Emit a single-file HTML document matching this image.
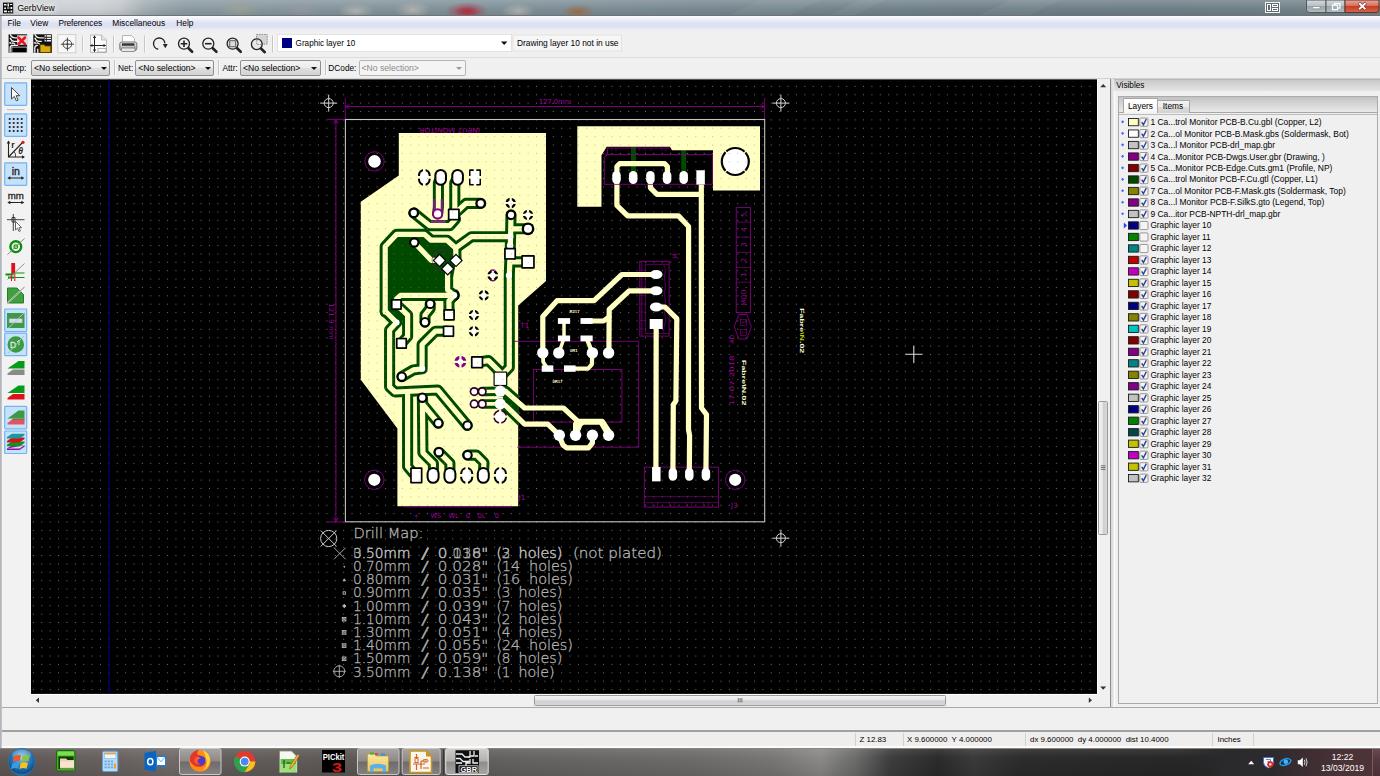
<!DOCTYPE html>
<html><head><meta charset="utf-8"><title>GerbView</title>
<style>
html,body{margin:0;padding:0;background:#f0f0f0;}
body{width:1380px;height:776px;overflow:hidden;font-family:"Liberation Sans",sans-serif;font-size:8.3px;color:#000;}
#root{position:relative;width:1380px;height:776px;overflow:hidden;background:#f0f0f0;}
.a{position:absolute;}
.t{position:absolute;white-space:pre;line-height:10px;height:10px;}
svg{position:absolute;overflow:visible;}
/* title bar */
#title{left:0;top:0;width:1380px;height:15px;background:linear-gradient(90deg,#cdd1d5 0,#cbcfd3 7%,#c2c7cb 8.7%,#a3adb3 10.5%,#98a4aa 11.6%,#8b9aa1 13.5%,#84949c 25%,#7d8e96 40%,#75868e 55%,#6f8088 70%,#6d7e86 85%,#738489 100%);}
#title:after{content:"";position:absolute;left:0;top:0;width:100%;height:100%;background:linear-gradient(180deg,rgba(255,255,255,.18) 0,rgba(255,255,255,0) 60%,rgba(0,0,0,.08) 100%);}
#tline{left:0;top:15px;width:1380px;height:1px;background:#6d7478;}
#menu{left:1px;top:16px;width:1379px;height:14px;background:linear-gradient(180deg,#fbfcfe 0,#eef0f8 25%,#dde1f0 55%,#dfe3f1 80%,#eceef6 100%);}
#tb1{left:1px;top:30px;width:1379px;height:27px;background:#f0f0f0;}
#tb2{left:1px;top:57px;width:1379px;height:21px;background:#f0f0f0;border-top:1px solid #dcdcdc;box-sizing:border-box;}
.sep{position:absolute;width:1px;background:#c4c4c4;border-right:1px solid #fafafa;}
.combo{position:absolute;box-sizing:border-box;border:1px solid #8e8f8f;border-radius:2px;background:linear-gradient(180deg,#f4f4f4 0,#ececec 50%,#dfdfdf 51%,#d3d3d3 100%);}
.arrow{position:absolute;width:0;height:0;border-left:3px solid transparent;border-right:3px solid transparent;border-top:3.5px solid #111;}

</style></head>
<body>
<div id="root">
<!-- ===== title bar ===== -->
<div class="a" id="title"></div>
<svg style="left:0;top:0" width="1380" height="16" viewBox="0 0 1380 16">
  <defs>
    <radialGradient id="blob1"><stop offset="0" stop-color="#b02838" stop-opacity=".75"/><stop offset="1" stop-color="#b02838" stop-opacity="0"/></radialGradient><radialGradient id="blob4"><stop offset="0" stop-color="#a8a78c" stop-opacity=".5"/><stop offset="1" stop-color="#a8a78c" stop-opacity="0"/></radialGradient><radialGradient id="blob5"><stop offset="0" stop-color="#9a9a9c" stop-opacity=".5"/><stop offset="1" stop-color="#9a9a9c" stop-opacity="0"/></radialGradient>
    <radialGradient id="blob2"><stop offset="0" stop-color="#cfc4c0" stop-opacity=".6"/><stop offset="1" stop-color="#c8c2b4" stop-opacity="0"/></radialGradient>
    <radialGradient id="blob3"><stop offset="0" stop-color="#a0602a" stop-opacity=".75"/><stop offset="1" stop-color="#a0663a" stop-opacity="0"/></radialGradient>
    <linearGradient id="capg" x1="0" y1="0" x2="0" y2="1"><stop offset="0" stop-color="#d5dadd"/><stop offset=".45" stop-color="#b9c1c5"/><stop offset=".5" stop-color="#9aa5aa"/><stop offset="1" stop-color="#b4bdc1"/></linearGradient>
    <linearGradient id="capr" x1="0" y1="0" x2="0" y2="1"><stop offset="0" stop-color="#e9a99b"/><stop offset=".45" stop-color="#d8705c"/><stop offset=".5" stop-color="#c33d22"/><stop offset="1" stop-color="#d9664a"/></linearGradient>
  </defs>
  <ellipse cx="239" cy="9" rx="22" ry="9" fill="url(#blob4)"/>
  <ellipse cx="302" cy="10" rx="20" ry="8" fill="url(#blob5)"/>
  <ellipse cx="356" cy="11" rx="18" ry="8" fill="url(#blob2)"/>
  <ellipse cx="413" cy="10" rx="18" ry="9" fill="url(#blob2)"/>
  <ellipse cx="467" cy="11" rx="22" ry="9" fill="url(#blob1)"/>
  <ellipse cx="467" cy="12" rx="13" ry="6" fill="url(#blob1)"/>
  <ellipse cx="518" cy="11" rx="17" ry="8" fill="url(#blob2)"/>
  <ellipse cx="578" cy="12" rx="17" ry="8" fill="url(#blob3)"/>
  <path d="M760 0l-30 15h60l30-15zM860 0l-30 15h25l30-15zM1010 0l-30 15h50l30-15z" fill="#fff" fill-opacity=".05"/>
  <!-- app icon -->
  <g transform="translate(3,2.600)">
    <rect x="0" y="0" width="10.200" height="10.800" fill="#111"/>
    <path d="M1 1.500h2.500v1.500h-2.500zM4.500 1h1.500v3h-1.500zM7 1.500h2.200v1h-2.200zM1.200 4.800h1.800v1.500h-1.800zM4 5h2.500v1h-2.500zM7.500 4.300h1.700v2.200h-1.700zM1 8h3v1.600h-3zM5 8.300h1.500v1.300h-1.500zM7.500 8h1.700v1.600h-1.700z" fill="#f4f4f4"/>
  </g>
  <!-- window-switch icon -->
  <g transform="translate(1265,2)">
    <rect x="0.5" y="0.5" width="14" height="10" fill="#5d6a70" stroke="#f4f4f4" stroke-width="1"/>
    <rect x="2.5" y="2.5" width="3" height="6" fill="none" stroke="#fff" stroke-width="1"/>
    <rect x="7.5" y="2.5" width="5" height="2" fill="none" stroke="#fff" stroke-width="1"/>
    <rect x="7.5" y="6.5" width="5" height="2" fill="none" stroke="#fff" stroke-width="1"/>
  </g>
  <!-- caption buttons -->
  <path d="M1306.500 0v9.500q0 3 3 3h16.500v-12.500z" fill="url(#capg)" stroke="#4f5b60" stroke-width="1"/>
  <rect x="1326" y="0" width="19" height="12.500" fill="url(#capg)" stroke="#4f5b60" stroke-width="1"/>
  <path d="M1345 0v12.500h31q3 0 3 -3v-9.500z" fill="url(#capr)" stroke="#5a3530" stroke-width="1"/>
  <rect x="1312.500" y="6.500" width="7.500" height="2.300" rx=".6" fill="#fff" stroke="#667" stroke-width=".5"/>
  <rect x="1334.500" y="3.500" width="5.500" height="4.500" fill="none" stroke="#fff" stroke-width="1.200"/>
  <rect x="1332.500" y="5.200" width="5" height="4.500" fill="#a4aeb3" stroke="#fff" stroke-width="1.200"/>
  <path d="M1359.800 3.800l5 4.800M1364.800 3.800l-5 4.800" stroke="#6b2a20" stroke-width="3.200" stroke-linecap="round"/>
  <path d="M1359.800 3.800l5 4.800M1364.800 3.800l-5 4.800" stroke="#fff" stroke-width="1.900" stroke-linecap="square"/>
</svg>
<div class="t" style="left:17.500px;top:2.500px;font-size:8.500px;color:#000;text-shadow:0 0 4px #fff,0 0 6px #fff,0 0 8px #fff">GerbView</div>
<div class="a" id="tline"></div>
<div class="a" style="left:0;top:16px;width:2px;height:732px;background:linear-gradient(90deg,#a9adb1,#c9ccd0);z-index:5"></div>
<!-- ===== menu bar ===== -->
<div class="a" id="menu"></div>
<div class="t" style="left:7.500px;top:18px;font-size:8.300px">File</div>
<div class="t" style="left:30.300px;top:18px;font-size:8.300px">View</div>
<div class="t" style="left:58.500px;top:18px;font-size:8.300px;letter-spacing:-.12px">Preferences</div>
<div class="t" style="left:112.300px;top:18px;font-size:8.350px">Miscellaneous</div>
<div class="t" style="left:176.300px;top:18px;font-size:8.300px">Help</div>
<!-- ===== toolbar 1 ===== -->
<div class="a" id="tb1"></div>
<div class="a" id="tb2"></div>
<svg style="left:0;top:30px" width="640" height="27" viewBox="0 30 640 27">
  <defs>
    <linearGradient id="prn" x1="0" y1="0" x2="0" y2="1"><stop offset="0" stop-color="#f4f4f4"/><stop offset="1" stop-color="#9a9a9a"/></linearGradient>
  </defs>
  <!-- icon1: clear layers -->
  <g transform="translate(8.600,34.300)">
    <rect x="0" y="0" width="18.500" height="18.500" fill="#111"/>
    <path d="M1.500 0q1.500 3.500 5 3.500h4M1.500 3.500q1 3 4 3.500h5.500M.5 8.500h3q2 0 3 1.500M1.500 18.500v-5q0-2.500 3-2.500h5" fill="none" stroke="#f4f4f4" stroke-width="1.300"/>
    <circle cx="3" cy="8.500" r="1.100" fill="#111" stroke="#f4f4f4" stroke-width=".8"/>
    <rect x="3.300" y="12.800" width="15.200" height="5.700" fill="#000" stroke="#f4f4f4" stroke-width=".7"/>
    <rect x="8.500" y="1" width="10" height="9.500" fill="#f4f4f4" fill-opacity=".9"/>
    <path d="M9.800 3.200l6.600 6.600M16.400 3.200l-6.600 6.600" stroke="#ee1122" stroke-width="2.500" stroke-linecap="round"/>
  </g>
  <!-- icon2: open -->
  <g transform="translate(33.300,34.300)">
    <rect x="0" y="0" width="18.500" height="18.500" fill="#111"/>
    <path d="M1.500 0q1.500 3.500 5 3.500h4M1.500 3.500q1 3 4 3.500h3M.5 8.500h3q2 0 3 1.500M1.500 18.500v-5q0-2.500 3-2.500M4.500 18.500v-4" fill="none" stroke="#f4f4f4" stroke-width="1.300"/>
    <circle cx="3" cy="8.500" r="1.100" fill="#111" stroke="#f4f4f4" stroke-width=".8"/>
    <rect x="11.300" y=".8" width="6.400" height="6.400" fill="#f4f4f4"/>
    <path d="M13 .8v6.400M11.300 3h6.400M11.300 5.200h6.400" stroke="#111" stroke-width=".9"/>
    <path d="M6.700 10.200h4l1.200 1.400h5.700v6.600h-10.900z" fill="#d9aa0a" stroke="#4a3a00" stroke-width=".9"/>
  </g>
  <!-- icon3: origin -->
  <rect x="57.800" y="34.600" width="18" height="18.200" fill="#f8f8f8" stroke="#cfcfcf" stroke-width="1"/>
  <g stroke="#444" stroke-width="1" fill="none"><circle cx="67.400" cy="44.200" r="4.300"/><path d="M67.400 37.600v13.200M60.800 44.200h13.200"/></g><circle cx="67.400" cy="44.200" r=".9" fill="#333"/>
  <!-- sep -->
  <path d="M82.500 35.500v17M113.500 35.500v17M144.500 35.500v17M272.500 35.500v17" stroke="#c6c6c6" stroke-width="1"/>
  <path d="M83.500 35.500v17M114.500 35.500v17M145.500 35.500v17M273.500 35.500v17" stroke="#fbfbfb" stroke-width="1"/>
  <!-- icon4: page settings -->
  <g transform="translate(89,34.500)">
    <path d="M1.500 .5h11l5 5v12.500h-16z" fill="#fbfbfb" stroke="#bdbdbd" stroke-width="1"/>
    <path d="M12.500 .5v5h5" fill="#e4e4e4" stroke="#bdbdbd" stroke-width="1"/>
    <path d="M5.500 1.500v15.500M1.500 11h15" stroke="#222" stroke-width="1" fill="none"/>
    <path d="M5.500 .8l-1.600 2.700h3.200zM5.500 17.700l-1.600-2.700h3.200zM.8 11l2.700-1.600v3.200zM17.200 11l-2.700-1.600v3.200z" fill="#222"/>
    <rect x="9" y="14" width="8" height="3.500" fill="#fff" stroke="#999" stroke-width=".7"/>
  </g>
  <!-- icon5: printer -->
  <g transform="translate(119,34.500)">
    <path d="M3.500 1h9l3 3v5h-12z" fill="#fdfdfd" stroke="#b5b5b5" stroke-width="1"/>
    <rect x=".8" y="7.500" width="17" height="8.500" rx="2" fill="url(#prn)" stroke="#777" stroke-width="1"/>
    <rect x="3" y="8.800" width="12.500" height="2.400" fill="#333"/>
    <rect x="2.500" y="13.500" width="13.500" height="3.500" rx="1" fill="#e9e9e9" stroke="#777" stroke-width=".8"/>
    <rect x="15" y="11.800" width="1.300" height="1.300" fill="#4c4"/>
  </g>
  <!-- icon6: refresh -->
  <path d="M158.200 49.300A5.700 5.700 0 1 1 164.900 43.200" fill="none" stroke="#222" stroke-width="1.400"/>
  <path d="M162.900 44l4.800 0-2.400 4.300z" fill="#222"/>
  <!-- zoom icons -->
  <g fill="none" stroke="#222">
    <circle cx="184" cy="43.700" r="5.500" stroke-width="1.300"/>
    <path d="M180.700 43.700h6.600M184 40.400v6.600" stroke-width="1.600"/>
    <path d="M188.500 48.300l3.600 3.500" stroke-width="2.600" stroke-linecap="round"/>
    <circle cx="208.300" cy="43.700" r="5.500" stroke-width="1.300"/>
    <path d="M205 43.700h6.600" stroke-width="1.600"/>
    <path d="M212.800 48.300l3.600 3.500" stroke-width="2.600" stroke-linecap="round"/>
    <circle cx="232.600" cy="43.700" r="5.500" stroke-width="1.300" fill="#e4e4e4"/>
    <rect x="229.600" y="40.700" width="6" height="6" rx=".8" stroke="#777" stroke-width="1.300" fill="#dcdcdc"/>
    <path d="M237.100 48.300l3.600 3.500" stroke-width="2.600" stroke-linecap="round"/>
    <rect x="256.600" y="34.400" width="10.600" height="9.800" fill="#d4d4d4" stroke="#777" stroke-width=".8" stroke-dasharray="1.500 1"/>
    <circle cx="256.800" cy="44.200" r="5.400" stroke-width="1.300" fill="#e8e8e8"/>
    <path d="M256.800 40v4.500h4.500" stroke="#777" stroke-width=".8" stroke-dasharray="1.500 1"/>
    <path d="M261.200 48.700l3.600 3.500" stroke-width="2.600" stroke-linecap="round"/>
  </g>
  <!-- layer combo -->
  <rect x="277.500" y="34.500" width="234" height="17" fill="#fff" stroke="#e3e3e3" stroke-width="1"/>
  <rect x="282" y="38" width="10" height="10" fill="#000084"/>
  <path d="M501 41.500h6.400l-3.200 3.600z" fill="#111"/>
  <rect x="513" y="35" width="108.500" height="16" fill="#f6f6f6" stroke="#e2e2e2" stroke-width="1"/>
</svg>
<div class="t" style="left:295.600px;top:38.800px;font-size:8.150px">Graphic layer 10</div>
<div class="t" style="left:517px;top:38.200px;font-size:8.400px">Drawing layer 10 not in use</div>
<!-- ===== toolbar 2 ===== -->
<div class="t" style="left:6.500px;top:62.500px;font-size:8.300px">Cmp:</div>
<div class="combo" style="left:31px;top:59.500px;width:78.500px;height:16.500px"></div>
<div class="t" style="left:34px;top:63px;font-size:8.600px">&lt;No selection&gt;</div>
<div class="arrow" style="left:100.500px;top:67px"></div>
<div class="sep" style="left:113.500px;top:60px;height:15px"></div>
<div class="t" style="left:118px;top:62.500px;font-size:8.300px">Net:</div>
<div class="combo" style="left:135.300px;top:59.500px;width:78.500px;height:16.500px"></div>
<div class="t" style="left:138.300px;top:63px;font-size:8.600px">&lt;No selection&gt;</div>
<div class="arrow" style="left:204.800px;top:67px"></div>
<div class="sep" style="left:218px;top:60px;height:15px"></div>
<div class="t" style="left:222.500px;top:62.500px;font-size:8.300px">Attr:</div>
<div class="combo" style="left:240px;top:59.500px;width:80.500px;height:16.500px"></div>
<div class="t" style="left:243px;top:63px;font-size:8.600px">&lt;No selection&gt;</div>
<div class="arrow" style="left:310.500px;top:67px"></div>
<div class="sep" style="left:324.500px;top:60px;height:15px"></div>
<div class="t" style="left:328.300px;top:62.500px;font-size:8.300px">DCode:</div>
<div class="combo" style="left:358.500px;top:60px;width:107px;height:15.500px;background:#f4f4f4;border-color:#b5b5b5"></div>
<div class="t" style="left:361.500px;top:63px;font-size:8.600px;color:#8a8a8a">&lt;No selection&gt;</div>
<div class="arrow" style="left:456px;top:67px;border-top-color:#999"></div>
<div class="a" style="left:1px;top:77.500px;width:1379px;height:2px;background:linear-gradient(180deg,#e4e4e4,#9a9a9a)"></div>

<!-- ===== left toolbar ===== -->
<svg style="left:0;top:79px" width="31" height="628" viewBox="0 79 31 628">
  <rect x="1" y="79" width="30" height="628" fill="#f2f2f2"/>
  <g fill="#c6e2fb" stroke="#6fb4f6" stroke-width="1.200">
    <rect x="4.700" y="82.800" width="22" height="22.500" rx=".8"/>
    <rect x="4.700" y="113.800" width="22" height="22.500" rx=".8"/>
    <rect x="4.700" y="162.800" width="22" height="22.500" rx=".8"/>
    <rect x="4.700" y="309" width="22" height="22.500" rx=".8"/>
    <rect x="4.700" y="333.200" width="22" height="22.500" rx=".8"/>
    <rect x="4.700" y="406.300" width="22" height="22.500" rx=".8"/>
    <rect x="4.700" y="431" width="22" height="22.500" rx=".8"/>
  </g>
  <path d="M7 109.700h17.500" stroke="#bcbcbc" stroke-width="1"/>
  <!-- 1 pointer -->
  <path d="M11.500 87.500v11.500l2.800-2.600 2 4.400 1.800-.8-2-4.300h3.700z" fill="#fff" stroke="#444" stroke-width="1" stroke-linejoin="round"/>
  <!-- 2 grid -->
  <g fill="#222">
    <circle cx="9.700" cy="119" r="1.100"/><circle cx="13.700" cy="119" r="1.100"/><circle cx="17.700" cy="119" r="1.100"/><circle cx="21.700" cy="119" r="1.100"/>
    <circle cx="9.700" cy="123" r="1.100"/><circle cx="13.700" cy="123" r="1.100"/><circle cx="17.700" cy="123" r="1.100"/><circle cx="21.700" cy="123" r="1.100"/>
    <circle cx="9.700" cy="127" r="1.100"/><circle cx="13.700" cy="127" r="1.100"/><circle cx="17.700" cy="127" r="1.100"/><circle cx="21.700" cy="127" r="1.100"/>
    <circle cx="9.700" cy="131" r="1.100"/><circle cx="13.700" cy="131" r="1.100"/><circle cx="17.700" cy="131" r="1.100"/><circle cx="21.700" cy="131" r="1.100"/>
  </g>
  <!-- 3 polar -->
  <g stroke="#222" stroke-width="1.100" fill="none">
    <path d="M8.500 141.500v15.500h15.500"/><path d="M8.500 157l14.500-15"/><path d="M14 151.500a6 6 0 0 1 1.500 5.500" stroke-width=".8"/>
  </g>
  <path d="M8.500 140.500l-1.800 3h3.600zM25 157l-3-1.800v3.600z" fill="#222"/>
  <circle cx="23" cy="142.300" r="1.600" fill="#e81123"/>
  <text x="11.300" y="147.800" font-family="Liberation Sans,sans-serif" font-size="8.600" font-weight="bold" fill="#222">r</text>
  <text x="18.300" y="154" font-family="Liberation Sans,sans-serif" font-size="8.600" font-weight="bold" font-style="italic" fill="#222">θ</text>
  <!-- 4 in -->
  <text x="15.800" y="174.500" text-anchor="middle" font-family="Liberation Sans,sans-serif" font-size="10.600" fill="#222" stroke="#222" stroke-width=".3">in</text>
  <path d="M9 178h13.500" stroke="#222" stroke-width="1"/><path d="M7.300 178l3-1.800v3.600zM24.300 178l-3-1.800v3.600z" fill="#222"/>
  <!-- 5 mm -->
  <text x="15.800" y="198.500" text-anchor="middle" font-family="Liberation Sans,sans-serif" font-size="9.700" fill="#222" stroke="#222" stroke-width=".3">mm</text>
  <path d="M9 202.500h13.500" stroke="#222" stroke-width="1"/><path d="M7.300 202.500l3-1.800v3.600zM24.300 202.500l-3-1.800v3.600z" fill="#222"/>
  <!-- 6 cursor cross -->
  <path d="M7 219.700h17.500M13.300 214v17" stroke="#444" stroke-width="1"/>
  <path d="M12 217.500h3v4.500h-3z" fill="none" stroke="#222" stroke-width=".8"/>
  <path d="M15.500 221.500v8.500l2-1.800 1.500 3.300 1.400-.6-1.500-3.200h2.800z" fill="#fff" stroke="#555" stroke-width=".9" stroke-linejoin="round"/>
  <!-- 7 pad outline -->
  <path d="M7.500 254.500l17-16" stroke="#888" stroke-width=".9"/>
  <circle cx="15.800" cy="246.700" r="5.400" fill="none" stroke="#0a8f0a" stroke-width="2.400"/>
  <circle cx="15.800" cy="246.700" r="1.800" fill="none" stroke="#0a8f0a" stroke-width="1.200"/>
  <path d="M7.500 254.500l17-16" stroke="#999" stroke-width=".6"/>
  <!-- 8 track outline -->
  <rect x="11.300" y="263" width="3.800" height="11" fill="#e0101a"/>
  <path d="M5.500 274.500h8M8 277.500h6" stroke="#0a8f0a" stroke-width="2.200"/>
  <path d="M14.500 273h10M15 277.500h9.500" stroke="#0a8f0a" stroke-width="1"/>
  <path d="M11.500 274v7M14.800 274v7" stroke="#e0101a" stroke-width="1"/>
  <path d="M7.500 279.500l17-16" stroke="#888" stroke-width=".9"/>
  <!-- 9 polygon outline -->
  <path d="M7.500 288h9.500l6.500 6.500v8.500h-16z" fill="#3fa03f" stroke="#2c7a2c" stroke-width="1"/>
  <path d="M7 303.500l17.500-16.500" stroke="#ddd" stroke-width="1.600"/>
  <path d="M7 303.500l17.500-16.500" stroke="#888" stroke-width=".8"/>
  <!-- 10 negative -->
  <rect x="7" y="313" width="17.500" height="15" fill="#3c9a45"/>
  <rect x="9" y="318.500" width="13.500" height="4.500" fill="#cfe0ee" stroke="#888" stroke-width=".6"/>
  <path d="M7.500 329l17-16.500" stroke="#b9c9c0" stroke-width="1"/>
  <!-- 11 dcode -->
  <circle cx="15.800" cy="344.500" r="8.300" fill="#3c9a45"/>
  <text x="10" y="348" font-family="Liberation Sans,sans-serif" font-size="8.500" fill="#dfeee0" stroke="#dfeee0" stroke-width=".3">D</text>
  <path d="M17 342l2-1.800v5" stroke="#dfeee0" stroke-width=".9" fill="none"/>
  <path d="M8 353l16-17" stroke="#a9c4ad" stroke-width="1"/>
  <!-- 12 layers grey -->
  <path d="M7.500 373.500l5.500-4h11.500v5.500h-17z" fill="#8a8a8a"/>
  <path d="M7.500 368.500l11-7.500h6v7.500z" fill="#0a9a1a"/>
  <!-- 13 layers red -->
  <path d="M7.500 398l5.500-4h11.500v5.500h-17z" fill="#e0101a"/>
  <path d="M7.500 393l11-7.500h6v7.500z" fill="#0a9a1a"/>
  <!-- 14 layers transparent -->
  <path d="M7.500 423l5.500-4h11.500v5.500h-17z" fill="#e05560"/>
  <path d="M7.500 418.500l11-8h6v8z" fill="#3c9a45"/>
  <path d="M13 418.500h11.500v1.500h-13z" fill="#8a6a50"/>
  <!-- 15 layers multi -->
  <path d="M7 448.500l5-3.300h12.500l-5 3.300h-12.500zM7 448.500v1.500h12.500l5-3.300v-1.500" fill="#9a0f9a"/>
  <path d="M7 444.700l5-3.300h12.500l-5 3.300zM7 444.700v1.500h12.500l5-3.300v-1.500l-5 3.300z" fill="#0a9a1a"/>
  <path d="M7 440.900l5-3.300h12.500l-5 3.300zM7 440.900v1.500h12.500l5-3.300v-1.500l-5 3.300z" fill="#d8101a"/>
  <path d="M7 437.100l5-3.300h12.500l-5 3.300zM7 437.100v1.500h12.500l5-3.300v-1.500l-5 3.300z" fill="#189a9a"/>
</svg>

<!-- ===== drawing canvas ===== -->
<svg style="left:31px;top:79px" width="1066" height="615" viewBox="31 79 1066 615">
<defs>
<pattern id="grid" x="-0.64" y="77.52" width="8.3850" height="8.3770" patternUnits="userSpaceOnUse"><rect x="0" y="0" width="1" height="1" fill="#707070"/></pattern>
<pattern id="grid2" x="-0.64" y="77.52" width="8.3850" height="8.3770" patternUnits="userSpaceOnUse"><rect x="0" y="0" width="1" height="1" fill="#8c8c78" fill-opacity=".5"/></pattern>
<clipPath id="cp1"><polygon points="398.8,132.9 546,132.9 546,281 518.2,305.4 518.2,506.3 397.4,506.3 397.4,428.4 360.8,379.7 360.8,201.7 398.8,175.4"/></clipPath>
<clipPath id="cpc"><polygon points="398.8,132.9 546,132.9 546,281 518.2,305.4 518.2,506.3 397.4,506.3 397.4,428.4 360.8,379.7 360.8,201.7 398.8,175.4"/><polygon points="577.3,126.3 760,126.3 760,190.4 713,190.4 713,150.3 672,150.3 670,146.7 606.7,146.7 601.5,155.2 601.5,206.7 577.3,206.7"/></clipPath>
<clipPath id="cv"><rect x="31" y="79" width="1066" height="615"/></clipPath>
<path id="gridp" d="M32.9 86.4H1097M32.9 94.78H1097M32.9 103.15H1097M32.9 111.53H1097M32.9 119.91H1097M32.9 128.29H1097M32.9 136.66H1097M32.9 145.04H1097M32.9 153.42H1097M32.9 161.79H1097M32.9 170.17H1097M32.9 178.55H1097M32.9 186.92H1097M32.9 195.3H1097M32.9 203.68H1097M32.9 212.06H1097M32.9 220.43H1097M32.9 228.81H1097M32.9 237.19H1097M32.9 245.56H1097M32.9 253.94H1097M32.9 262.32H1097M32.9 270.69H1097M32.9 279.07H1097M32.9 287.45H1097M32.9 295.83H1097M32.9 304.2H1097M32.9 312.58H1097M32.9 320.96H1097M32.9 329.33H1097M32.9 337.71H1097M32.9 346.09H1097M32.9 354.46H1097M32.9 362.84H1097M32.9 371.22H1097M32.9 379.6H1097M32.9 387.97H1097M32.9 396.35H1097M32.9 404.73H1097M32.9 413.1H1097M32.9 421.48H1097M32.9 429.86H1097M32.9 438.23H1097M32.9 446.61H1097M32.9 454.99H1097M32.9 463.37H1097M32.9 471.74H1097M32.9 480.12H1097M32.9 488.5H1097M32.9 496.87H1097M32.9 505.25H1097M32.9 513.63H1097M32.9 522H1097M32.9 530.38H1097M32.9 538.76H1097M32.9 547.13H1097M32.9 555.51H1097M32.9 563.89H1097M32.9 572.27H1097M32.9 580.64H1097M32.9 589.02H1097M32.9 597.4H1097M32.9 605.77H1097M32.9 614.15H1097M32.9 622.53H1097M32.9 630.9H1097M32.9 639.28H1097M32.9 647.66H1097M32.9 656.04H1097M32.9 664.41H1097M32.9 672.79H1097M32.9 681.17H1097M32.9 689.54H1097"/>
</defs>
<rect x="31" y="79.5" width="1066" height="614.4" fill="#000"/>
<use href="#gridp" stroke="#707070" stroke-width="1" stroke-dasharray="1 7.3850" fill="none"/>
<path d="M108.9 79.5V694" stroke="#00006c" stroke-width="1.4"/>
<path d="M633.5 146.7V172M683.7 150.3V172" stroke="#004a00" stroke-width="5"/>
<g fill="none" stroke="#840084" stroke-width=".9">
<path d="M513 341.3H638.700V447.200H517.200V341.3"/>
<rect x="533.6" y="369.5" width="88.3" height="52.6"/>
<rect x="639.800" y="261.300" width="29.300" height="74.800"/><path d="M669.100 264.300H645.400V333.500H669.100M641.800 261.300V336.100" stroke-width=".7"/><path d="M639.800 270.500h5.600M639.800 279h5.600M639.800 287h5.600M639.800 295.500h5.600M639.800 304h5.600M639.800 312h5.600M639.800 320.500h5.600M639.800 329h5.600" stroke-width=".5"/><path d="M663.500 264.300q3 5 1.500 8.500t0 8.500t0 8.500t0 8.500t0 8.500t0 8.500t0 8.500t-1.500 8.800" stroke-width=".6"/>
<rect x="644.3" y="467.1" width="74.3" height="40"/><path d="M644.3 496.6h74.3M644.3 502.400h74.3M652 502.400l1 4M658 502.400l-1 4M669 502.400l1 4M675 502.400l-1 4M686 502.400l1 4M692 502.400l-1 4M703 502.400l1 4M709 502.400l-1 4" stroke-width=".6"/>
</g>
<polygon points="398.8,132.9 546,132.9 546,281 518.2,305.4 518.2,506.3 397.4,506.3 397.4,428.4 360.8,379.7 360.8,201.7 398.8,175.4" fill="#ffffc2" />
<polygon points="577.3,126.3 760,126.3 760,190.4 713,190.4 713,150.3 672,150.3 670,146.7 606.7,146.7 601.5,155.2 601.5,206.7 577.3,206.7" fill="#ffffc2" />
<path d="M513 341.3H518.500" stroke="#840084" stroke-width=".9"/>
<polygon points="388.1,246.2 397.2,237.3 426,237.3 431,240.2 447,240.2 455.7,248 456,262 450,292.6 400,292.6 393,299 404,311 404,321 397,321.5 388.1,311.5" fill="#004a00" />
<polygon points="503,392 518.2,405.5 518.2,417 503,403" fill="#004a00" />
<g clip-path="url(#cp1)" fill="none" stroke="#004a00" stroke-linejoin="round" stroke-linecap="round">
<polyline points="440.7,177.4 438.4,183 438.4,207 437.6,213.9" stroke-width="11.1"/>
<polyline points="457.6,177.4 454.8,183 454.8,208 453.8,214.5" stroke-width="11.1"/>
<polyline points="480.7,203.4 466,203.4 456,212.5" stroke-width="11.1"/>
<polyline points="413.8,212.9 429.5,225.6 449.8,225.6 455.5,219" stroke-width="11.1"/>
<polyline points="385.2,312 385.2,246.5 396.5,234.4 424.5,234.4 431,240.2 447,240.2 455.7,248 471.4,236.7 510,236.7" stroke-width="11.1"/>
<polyline points="455.7,248 456,259" stroke-width="11.1"/>
<polyline points="385.2,311 396.6,322.5 389.6,330 389.6,387 395,392 437.8,390 467.3,425.4" stroke-width="11.1"/>
<polyline points="407.6,392 407.6,466.5 413,473" stroke-width="11.1"/>
<polyline points="422.4,397.7 422.9,452.8 433.4,463.4 433.4,470" stroke-width="11.1"/>
<polyline points="422.4,397.7 422.8,404.5 438.3,423.2" stroke-width="11.1"/>
<polyline points="447.6,268.6 447.6,290 454,295.2 448.9,301 449.1,314.9" stroke-width="11.1"/>
<polyline points="396.4,304.5 396.6,299 400.5,295.4 452,295.4" stroke-width="11.1"/>
<polyline points="396.4,304.5 407.6,315 407.6,336.4 401.5,343.3" stroke-width="11.1"/>
<polyline points="430.2,303.9 430.2,308.5 425,315 425,322.2" stroke-width="11.1"/>
<polyline points="448.5,331.2 435.4,331.2 422.1,344.5 422.1,368.8 413.4,369.9 401.8,376.6" stroke-width="11.1"/>
<polyline points="511,214.9 510.6,236.4 510.1,253.8 509.3,275.5 509.3,367.4 503,374" stroke-width="11.1"/>
<polyline points="528,228.8 513,228.8" stroke-width="11.1"/>
<polyline points="528,261.9 512,261.9" stroke-width="11.1"/>
<polyline points="477,362.2 488.6,360.6 500.5,372.5" stroke-width="11.1"/>
<polyline points="482.2,391.5 500.2,391.3" stroke-width="9.5"/>
<polyline points="482.2,403.9 500.2,403.9" stroke-width="9.5"/>
<polyline points="500.2,391.2 505.5,391.2 524.6,408 563.4,408 577.9,421.3 602.2,421.3 608.6,431" stroke-width="11.1"/>
<polyline points="577.9,421.3 575.6,424 575.6,435.2" stroke-width="11.1"/>
<polyline points="500.2,403.9 505.5,405.5 524.6,424.2 547.8,424.2 559.3,435.2" stroke-width="11.1"/>
<polyline points="438.9,452.2 449.9,463.2 449.9,470" stroke-width="11.1"/>
<polyline points="467.6,455.1 476.6,455.1 484,462.6 483.6,470" stroke-width="11.1"/>
</g>
<g fill="none" stroke="#ffffc2" stroke-linejoin="round" stroke-linecap="round">
<polyline points="440.7,177.4 438.4,183 438.4,207 437.6,213.9" stroke-width="5.2"/>
<polyline points="457.6,177.4 454.8,183 454.8,208 453.8,214.5" stroke-width="5.2"/>
<polyline points="480.7,203.4 466,203.4 456,212.5" stroke-width="5.2"/>
<polyline points="413.8,212.9 429.5,225.6 449.8,225.6 455.5,219" stroke-width="5.2"/>
<polyline points="385.2,312 385.2,246.5 396.5,234.4 424.5,234.4 431,240.2 447,240.2 455.7,248 471.4,236.7 510,236.7" stroke-width="5.2"/>
<polyline points="455.7,248 456,259" stroke-width="5.2"/>
<polyline points="385.2,311 396.6,322.5 389.6,330 389.6,387 395,392 437.8,390 467.3,425.4" stroke-width="5.2"/>
<polyline points="407.6,392 407.6,466.5 413,473" stroke-width="5.2"/>
<polyline points="422.4,397.7 422.9,452.8 433.4,463.4 433.4,470" stroke-width="5.2"/>
<polyline points="422.4,397.7 422.8,404.5 438.3,423.2" stroke-width="5.2"/>
<polyline points="414.3,242.5 431.4,260.4 439.5,260.4" stroke-width="5.2"/>
<polyline points="447.6,268.6 447.6,290 454,295.2 448.9,301 449.1,314.9" stroke-width="5.2"/>
<polyline points="396.4,304.5 396.6,299 400.5,295.4 452,295.4" stroke-width="5.2"/>
<polyline points="396.4,304.5 407.6,315 407.6,336.4 401.5,343.3" stroke-width="5.2"/>
<polyline points="430.2,303.9 430.2,308.5 425,315 425,322.2" stroke-width="5.2"/>
<polyline points="448.5,331.2 435.4,331.2 422.1,344.5 422.1,368.8 413.4,369.9 401.8,376.6" stroke-width="5.2"/>
<polyline points="511,214.9 510.6,236.4 510.1,253.8 509.3,275.5 509.3,367.4 503,374" stroke-width="5.2"/>
<polyline points="528,228.8 513,228.8" stroke-width="5.2"/>
<polyline points="528,261.9 512,261.9" stroke-width="5.2"/>
<polyline points="477,362.2 488.6,360.6 500.5,372.5" stroke-width="5.2"/>
<polyline points="482.2,391.5 500.2,391.3" stroke-width="3.6"/>
<polyline points="482.2,403.9 500.2,403.9" stroke-width="3.6"/>
<polyline points="500.2,391.2 505.5,391.2 524.6,408 563.4,408 577.9,421.3 602.2,421.3 608.6,431" stroke-width="5.2"/>
<polyline points="577.9,421.3 575.6,424 575.6,435.2" stroke-width="5.2"/>
<polyline points="500.2,403.9 505.5,405.5 524.6,424.2 547.8,424.2 559.3,435.2" stroke-width="5.2"/>
<polyline points="438.9,452.2 449.9,463.2 449.9,470" stroke-width="5.2"/>
<polyline points="467.6,455.1 476.6,455.1 484,462.6 483.6,470" stroke-width="5.2"/>
<polyline points="616.9,177.4 616.9,166.5 619.7,163.7 664.6,163.7 667.4,166.5 667.4,177.4" stroke-width="5.2"/>
<polyline points="616.9,177.4 616.9,205.4 627.6,215.9 678.5,215.9 688.6,226.5 688.5,429.6 689.6,435.4 689.3,474" stroke-width="5.2"/>
<polyline points="650.4,177.4 650.4,187.8 657,194.3 701,194.3" stroke-width="5.2"/>
<polyline points="701.3,177.4 701.5,408 706.5,414.6 705.9,474" stroke-width="5.2"/>
<polyline points="656.3,307 665,307 676.8,318.6 675.9,400.9 673.3,404.8 672.9,474" stroke-width="5.2"/>
<polyline points="656.2,324 655.9,474" stroke-width="5.2"/>
<polyline points="656.2,274.5 621.9,274.5 594.1,300.7 557,300.7 542.8,316.4 542.8,352.9" stroke-width="5.2"/>
<polyline points="656.2,290.8 629.1,290.8 609.2,309.5 608.9,352.9" stroke-width="5.2"/>
<polyline points="609,317 603.5,321 586.6,321" stroke-width="5.2"/>
<polyline points="564,321 564,338.4 558.8,352.9" stroke-width="3.5"/>
<polyline points="586.6,338.4 592.4,352.9 591.8,364.5 588,368.6 569.8,368.6" stroke-width="4.2"/>
<polyline points="542.8,352.9 543.2,362 547.5,368.6" stroke-width="3.8"/>
<polyline points="558.8,435.2 563,445 566.5,447.8 588.5,447.8 592.4,443 592.4,435.2" stroke-width="5.2"/>
<polyline points="575.6,435.2 580,424.5 583,422.2 601,422.2 608.6,435.2" stroke-width="5.2"/>
</g>
<path d="M434.300 199V212M441.900 199V212" stroke="#7a1c7a" stroke-width="2.300" fill="none"/>
<path d="M431 221.700H445.700" stroke="#8a2a8a" stroke-width="2.300"/>
<g fill="none" stroke="#840084" stroke-width=".9">
<path d="M345.3 106.5H764.6M345.3 98V119M764.6 98V119M345.3 106.5l4-2M345.3 106.5l4 2M764.6 106.5l-4-2M764.6 106.5l-4 2"/>
<path d="M335.9 119.4V521.8M327.5 119.4H345M327.5 521.8H345M335.9 119.4l-2 4M335.9 119.4l2 4M335.9 521.8l-2-4M335.9 521.8l2-4" stroke-width="1.2" stroke="#6c006c"/>
<path d="M604.4 184.3V157.5l3-3V148H670M604.4 154.6h108v29.700h-108" />
<path d="M612 148v3M616 148v3M639 148v3M645 148v3M651 148v3M662 148v3M666 148v3" stroke-width=".6"/>
<rect x="736.2" y="207.6" width="14.200" height="105.1"/>
<path d="M736.2 222.1h14.200M736.2 237.1h14.200M736.2 252.4h14.200M736.2 267.4h14.200M736.2 282.2h14.200" stroke-width=".7"/>
<path d="M738.800 314.500h8l4.500 12.200l-4.500 12.300h-8l-4.500 -12.300z"/><rect x="740.300" y="319.400" width="6" height="6" stroke-width=".6"/><rect x="740.300" y="329.600" width="6" height="6" stroke-width=".6"/>
<path d="M404 507H512.5M518.3 447.2H517.2"/>
<circle cx="442.4" cy="260.1" r="10.4" stroke-width=".5"/>
<circle cx="374.5" cy="161.4" r="9.700"/>
<circle cx="374.3" cy="479.8" r="9.700"/>
<circle cx="735.2" cy="479.8" r="9.700"/>
</g>
<rect x="418" y="169" width="12.6" height="16.8" rx="6.3" ry="6.3" fill="#000000" />
<path d="M417.5 177.4h13.6 M424.3 168.5v17.8" stroke="#ffffc2" stroke-width="2.6"/>
<rect x="420" y="171" width="8.6" height="12.8" rx="4.3" ry="4.3" fill="#ffffff" />
<rect x="434.4" y="169" width="12.6" height="16.8" rx="6.3" ry="6.3" fill="#000000" />
<rect x="436.4" y="171" width="8.6" height="12.8" rx="4.3" ry="4.3" fill="#ffffff" />
<rect x="451.3" y="169" width="12.6" height="16.8" rx="6.3" ry="6.3" fill="#000000" />
<rect x="453.3" y="171" width="8.6" height="12.8" rx="4.3" ry="4.3" fill="#ffffff" />
<rect x="469" y="169.3" width="12" height="16.2" fill="#000000" rx="1"/>
<rect x="470.7" y="171" width="8.6" height="12.8" fill="#ffffff" />
<path d="M468 177.4h14M475 169v17" stroke="#ffffc2" stroke-width="2.6"/>
<rect x="470.7" y="171" width="8.6" height="12.8" fill="#ffffff" />
<rect x="410.1" y="467.3" width="12.4" height="16.2" fill="#000000" rx="1"/>
<rect x="411.8" y="469" width="9" height="12.8" fill="#ffffff" />
<rect x="426.6" y="467" width="13" height="16.8" rx="6.5" ry="6.5" fill="#000000" />
<rect x="428.6" y="469" width="9" height="12.8" rx="4.5" ry="4.5" fill="#ffffff" />
<rect x="443.4" y="467" width="13" height="16.8" rx="6.5" ry="6.5" fill="#000000" />
<rect x="445.4" y="469" width="9" height="12.8" rx="4.5" ry="4.5" fill="#ffffff" />
<rect x="460.2" y="467" width="13" height="16.8" rx="6.5" ry="6.5" fill="#000000" />
<path d="M459.7 475.4h14 M466.7 466.5v17.8" stroke="#ffffc2" stroke-width="2.6"/>
<rect x="462.2" y="469" width="9" height="12.8" rx="4.5" ry="4.5" fill="#ffffff" />
<rect x="476.8" y="467" width="13" height="16.8" rx="6.5" ry="6.5" fill="#000000" />
<rect x="478.8" y="469" width="9" height="12.8" rx="4.5" ry="4.5" fill="#ffffff" />
<rect x="493.9" y="467" width="13" height="16.8" rx="6.5" ry="6.5" fill="#000000" />
<path d="M493.4 475.4h14 M500.4 466.5v17.8" stroke="#ffffc2" stroke-width="2.6"/>
<rect x="495.9" y="469" width="9" height="12.8" rx="4.5" ry="4.5" fill="#ffffff" />
<circle cx="437.6" cy="213.9" r="5.6" fill="#840084" />
<circle cx="437.6" cy="213.9" r="3.6" fill="#ffffff" />
<rect x="447.8" y="208.5" width="12" height="12" fill="#000000" rx="1"/>
<rect x="449.5" y="210.2" width="8.6" height="8.6" fill="#ffffff" />
<circle cx="480.7" cy="203.4" r="5.4" fill="#000000" />
<circle cx="480.7" cy="203.4" r="3.1" fill="#ffffff" />
<circle cx="413.8" cy="212.9" r="5.4" fill="#000000" />
<circle cx="413.8" cy="212.9" r="3.1" fill="#ffffff" />
<circle cx="510.7" cy="203" r="5.2" fill="#000000" />
<path d="M505 203h11.4 M510.7 197.3v11.4" stroke="#ffffc2" stroke-width="2.200"/>
<circle cx="510.7" cy="203" r="2.8" fill="#ffffff" />
<circle cx="511" cy="214.9" r="5.2" fill="#000000" />
<circle cx="511" cy="214.9" r="3.1" fill="#ffffff" />
<circle cx="528" cy="214.9" r="5.2" fill="#000000" />
<path d="M522.3 214.9h11.4 M528 209.2v11.4" stroke="#ffffc2" stroke-width="2.200"/>
<circle cx="528" cy="214.9" r="2.8" fill="#ffffff" />
<circle cx="528" cy="228.8" r="6.4" fill="#000000" />
<circle cx="528" cy="228.8" r="4" fill="#ffffff" />
<circle cx="510.2" cy="236.4" r="3.2" fill="#ffffff" />
<circle cx="510.1" cy="245.4" r="3.2" fill="#ffffff" />
<rect x="504.1" y="247.8" width="12" height="12" fill="#000000" rx="1"/>
<rect x="505.8" y="249.5" width="8.6" height="8.6" fill="#ffffff" />
<rect x="521.2" y="255.1" width="13.6" height="13.6" fill="#000000" rx="1"/>
<rect x="522.9" y="256.8" width="10.2" height="10.2" fill="#ffffff" />
<circle cx="508.9" cy="275.6" r="3.1" fill="#ffffff" />
<circle cx="492.8" cy="275.4" r="5.4" fill="#000000" />
<path d="M486.9 275.4h11.8 M492.8 269.5v11.8" stroke="#ffffc2" stroke-width="2.200"/>
<circle cx="492.8" cy="275.4" r="2.9" fill="#ffffff" />
<path d="M490.300 270.700q2.500-1.200 5 0M490.300 280.100q2.500 1.200 5 0" stroke="#840084" stroke-width="1.500" fill="none"/>
<circle cx="483.8" cy="295.3" r="5.2" fill="#000000" />
<path d="M478.1 295.3h11.4 M483.8 289.6v11.4" stroke="#ffffc2" stroke-width="2.200"/>
<circle cx="483.8" cy="295.3" r="2.9" fill="#ffffff" />
<circle cx="473.9" cy="315" r="5.2" fill="#000000" />
<path d="M468.2 315h11.4 M473.9 309.3v11.4" stroke="#ffffc2" stroke-width="2.200"/>
<circle cx="473.9" cy="315" r="2.9" fill="#ffffff" />
<circle cx="473.9" cy="331.2" r="5.2" fill="#000000" />
<path d="M468.2 331.2h11.4 M473.9 325.5v11.4" stroke="#ffffc2" stroke-width="2.200"/>
<circle cx="473.9" cy="331.2" r="2.9" fill="#ffffff" />
<circle cx="414.3" cy="242.5" r="5.2" fill="#000000" />
<circle cx="414.3" cy="242.5" r="3.1" fill="#ffffff" />
<rect x="434.6" y="255.5" width="9.8" height="9.8" fill="#000" transform="rotate(45 439.5 260.4)"/>
<rect x="451.1" y="255.5" width="9.8" height="9.8" fill="#000" transform="rotate(45 456 260.4)"/>
<rect x="442.8" y="263.8" width="9.8" height="9.8" fill="#000" transform="rotate(45 447.7 268.7)"/>
<rect x="435.8" y="256.7" width="7.400" height="7.400" fill="#fff" transform="rotate(45 439.5 260.4)"/>
<rect x="452.3" y="256.7" width="7.400" height="7.400" fill="#fff" transform="rotate(45 456 260.4)"/>
<rect x="444" y="265" width="7.400" height="7.400" fill="#fff" transform="rotate(45 447.7 268.7)"/>
<path d="M455.500 290.200a5.400 5.400 0 0 1 0 10" stroke="#000" stroke-width="1.800" fill="none"/>
<circle cx="454" cy="295.2" r="3.1" fill="#ffffff" />
<rect x="390.9" y="299" width="11" height="11" fill="#000000" rx="1"/>
<rect x="392.6" y="300.7" width="7.6" height="7.6" fill="#ffffff" />
<circle cx="430.2" cy="303.9" r="5.2" fill="#000000" />
<circle cx="430.2" cy="303.9" r="3.1" fill="#ffffff" />
<circle cx="425" cy="322.2" r="5.2" fill="#000000" />
<circle cx="425" cy="322.2" r="3.1" fill="#ffffff" />
<rect x="443.3" y="309.1" width="11.6" height="11.6" fill="#000000" rx="1"/>
<rect x="445" y="310.8" width="8.2" height="8.2" fill="#ffffff" />
<rect x="442.7" y="325.4" width="11.6" height="11.6" fill="#000000" rx="1"/>
<rect x="444.4" y="327.1" width="8.2" height="8.2" fill="#ffffff" />
<circle cx="396.6" cy="322.5" r="3" fill="#ffffff" />
<rect x="395.9" y="337.7" width="11.2" height="11.2" fill="#000000" rx="1"/>
<rect x="397.6" y="339.4" width="7.8" height="7.8" fill="#ffffff" />
<circle cx="422.1" cy="368.7" r="3.1" fill="#ffffff" />
<circle cx="401.8" cy="376.7" r="5.2" fill="#000000" />
<circle cx="401.8" cy="376.7" r="3.1" fill="#ffffff" />
<circle cx="460.4" cy="361.8" r="6" fill="#840084" />
<path d="M453.9 361.8h13 M460.4 355.3v13" stroke="#ffffc2" stroke-width="2.200"/>
<circle cx="460.4" cy="361.8" r="2.9" fill="#ffffff" />
<rect x="470.9" y="356.1" width="12.4" height="12.4" fill="#000000" rx="1"/>
<rect x="472.6" y="357.8" width="9" height="9" fill="#ffffff" />
<rect x="493.5" y="371.5" width="13.8" height="14.6" fill="#000000" rx="1"/>
<rect x="494.7" y="372.7" width="11.4" height="12.2" fill="#ffffff" />
<circle cx="500.2" cy="391.2" r="5.6" fill="#ffffff" />
<circle cx="500.2" cy="403.9" r="5.6" fill="#ffffff" />
<circle cx="500.2" cy="416.7" r="7" fill="#300030" />
<path d="M492.7 416.7h15 M500.2 409.2v15" stroke="#ffffc2" stroke-width="2.200"/>
<circle cx="500.2" cy="416.7" r="5.4" fill="#ffffff" />
<circle cx="474.2" cy="391.6" r="4.6" fill="#2a002a" />
<circle cx="474.2" cy="391.6" r="2.9" fill="#ffffff" />
<circle cx="482.2" cy="391.6" r="4.6" fill="#2a002a" />
<circle cx="482.2" cy="391.6" r="2.9" fill="#ffffff" />
<circle cx="474.2" cy="403.9" r="4.6" fill="#2a002a" />
<circle cx="474.2" cy="403.9" r="2.9" fill="#ffffff" />
<circle cx="482.2" cy="403.9" r="4.6" fill="#2a002a" />
<circle cx="482.2" cy="403.9" r="2.9" fill="#ffffff" />
<circle cx="422.3" cy="397.7" r="5.2" fill="#000000" />
<circle cx="422.3" cy="397.7" r="3.1" fill="#ffffff" />
<circle cx="438.3" cy="423.2" r="5.2" fill="#000000" />
<circle cx="438.3" cy="423.2" r="3.1" fill="#ffffff" />
<circle cx="467.4" cy="425.4" r="5.2" fill="#000000" />
<circle cx="467.4" cy="425.4" r="3.1" fill="#ffffff" />
<circle cx="438.9" cy="452.2" r="5.2" fill="#000000" />
<circle cx="438.9" cy="452.2" r="3.1" fill="#ffffff" />
<circle cx="467.6" cy="455.1" r="5.2" fill="#000000" />
<circle cx="467.6" cy="455.1" r="3.1" fill="#ffffff" />
<circle cx="374.5" cy="161.4" r="6.3" fill="#ffffff" />
<circle cx="374.3" cy="479.8" r="6.1" fill="#ffffff" />
<circle cx="735.2" cy="479.8" r="6.1" fill="#ffffff" />
<circle cx="735.3" cy="161.5" r="14.6" fill="#000000" />
<path d="M724.5 150.400l22.200 22.200M746.700 150.400l-22.200 22.200" stroke="#ffffc2" stroke-width="1.300"/>
<circle cx="735.3" cy="161.5" r="12.4" fill="#ffffff" />
<rect x="612.25" y="170.9" width="8.5" height="13" rx="4.25" ry="4.25" fill="#ffffff" />
<rect x="628.95" y="170.9" width="8.5" height="13" rx="4.25" ry="4.25" fill="#ffffff" />
<rect x="646.15" y="170.9" width="8.5" height="13" rx="4.25" ry="4.25" fill="#ffffff" />
<rect x="662.85" y="170.9" width="8.5" height="13" rx="4.25" ry="4.25" fill="#ffffff" />
<rect x="679.45" y="170.9" width="8.5" height="13" rx="4.25" ry="4.25" fill="#ffffff" />
<rect x="696.35" y="170.25" width="8.5" height="14.3" fill="#ffffff" />
<rect x="649.9" y="270" width="12.6" height="9" rx="6.3" ry="4.5" fill="#ffffff" />
<rect x="649.9" y="286.3" width="12.6" height="9" rx="6.3" ry="4.5" fill="#ffffff" />
<rect x="649.9" y="302.5" width="12.6" height="9" rx="6.3" ry="4.5" fill="#ffffff" />
<rect x="649.7" y="319" width="13" height="10" fill="#ffffff" />
<rect x="652.05" y="467.05" width="8.5" height="14.3" fill="#ffffff" />
<rect x="668.65" y="467.7" width="8.5" height="13" rx="4.25" ry="4.25" fill="#ffffff" />
<rect x="685.05" y="467.7" width="8.5" height="13" rx="4.25" ry="4.25" fill="#ffffff" />
<rect x="701.65" y="467.7" width="8.5" height="13" rx="4.25" ry="4.25" fill="#ffffff" />
<rect x="557.9" y="318.1" width="12.2" height="5.8" fill="#ffffff" />
<rect x="580.5" y="318.1" width="12.2" height="5.8" fill="#ffffff" />
<rect x="557.9" y="335.5" width="12.2" height="5.8" fill="#ffffff" />
<rect x="580.5" y="335.5" width="12.2" height="5.8" fill="#ffffff" />
<rect x="541.7" y="365.4" width="11.6" height="6.4" fill="#ffffff" />
<rect x="564" y="365.4" width="11.6" height="6.4" fill="#ffffff" />
<circle cx="542.8" cy="352.9" r="5.7" fill="#ffffff" />
<circle cx="558.8" cy="352.9" r="5.7" fill="#ffffff" />
<circle cx="592.4" cy="352.9" r="5.7" fill="#ffffff" />
<circle cx="608.6" cy="352.9" r="5.7" fill="#ffffff" />
<circle cx="559.3" cy="435.2" r="5.7" fill="#ffffff" />
<circle cx="575.6" cy="435.2" r="5.7" fill="#ffffff" />
<circle cx="592.4" cy="435.2" r="5.7" fill="#ffffff" />
<circle cx="608.6" cy="435.2" r="5.7" fill="#ffffff" />
<g clip-path="url(#cpc)"><use href="#gridp" stroke="#8c8c78" stroke-opacity=".5" stroke-width="1" stroke-dasharray="1 7.3850" fill="none"/></g>
<rect x="345.4" y="119.5" width="419.3" height="402.3" fill="none" stroke="#c4c4c4" stroke-width="1.1"/>
<g stroke="#d4d4d4" stroke-width="1" fill="none"><circle cx="328.7" cy="103.1" r="4.500"/><path d="M320.2 103.1h17M328.7 94.6v17"/></g>
<g stroke="#d4d4d4" stroke-width="1" fill="none"><circle cx="780.9" cy="103.1" r="4.500"/><path d="M772.4 103.1h17M780.9 94.6v17"/></g>
<g stroke="#d4d4d4" stroke-width="1" fill="none"><circle cx="780.9" cy="538.2" r="4.500"/><path d="M772.4 538.2h17M780.9 529.7v17"/></g>
<g stroke="#c8c8c8" stroke-width="1" fill="none"><circle cx="328.7" cy="538.5" r="8.100"/><path d="M320.700 530.500l16 16M336.700 530.500l-16 16"/></g>
<path d="M905.300 354.300h17M913.800 345.800v17" stroke="#dcdcdc" stroke-width="1.100"/>
<text x="538.7" y="104.300" font-family="DejaVu Sans,Liberation Sans,sans-serif" font-weight="400" font-size="6.800" fill="#a000a0" textLength="32.600" lengthAdjust="spacingAndGlyphs">127.0mm</text>
<text transform="translate(329.200,303.200) rotate(90)" font-family="DejaVu Sans,Liberation Sans,sans-serif" font-weight="400" font-size="6.600" fill="#a000a0" textLength="36.600" lengthAdjust="spacingAndGlyphs">121.9 mm</text>
<text transform="translate(480,128.200) rotate(180)" font-family="DejaVu Sans,Liberation Sans,sans-serif" font-weight="400" font-size="6.500" fill="#a000a0" textLength="61" lengthAdjust="spacingAndGlyphs">INPUT  MONITOR</text>
<text x="413.6" y="518" font-family="DejaVu Sans,Liberation Sans,sans-serif" font-weight="400" font-size="6.500" fill="#a000a0">+</text>
<text x="430.5" y="518" font-family="DejaVu Sans,Liberation Sans,sans-serif" font-weight="400" font-size="6.500" fill="#a000a0">WS</text>
<text x="448.5" y="518" font-family="DejaVu Sans,Liberation Sans,sans-serif" font-weight="400" font-size="6.500" fill="#a000a0">WL</text>
<text x="465.8" y="518" font-family="DejaVu Sans,Liberation Sans,sans-serif" font-weight="400" font-size="6.500" fill="#a000a0">0</text>
<text x="477.6" y="518" font-family="DejaVu Sans,Liberation Sans,sans-serif" font-weight="400" font-size="6.500" fill="#a000a0">0L</text>
<text x="494.8" y="518" font-family="DejaVu Sans,Liberation Sans,sans-serif" font-weight="400" font-size="6.500" fill="#a000a0">0</text>
<text x="518.600" y="500" font-family="DejaVu Sans,Liberation Sans,sans-serif" font-weight="400" font-size="7.200" fill="#a000a0">J1</text>
<text x="520.300" y="327.800" font-family="DejaVu Sans,Liberation Sans,sans-serif" font-weight="400" font-size="7.200" fill="#a000a0">T1</text>
<text x="730.800" y="508" font-family="DejaVu Sans,Liberation Sans,sans-serif" font-weight="400" font-size="7.200" fill="#a000a0">J3</text>
<text transform="translate(676.500,258.800) rotate(-90)" font-family="DejaVu Sans,Liberation Sans,sans-serif" font-weight="400" font-size="6.500" fill="#a000a0">J4</text>
<text transform="translate(746,214.8) rotate(-90)" font-family="DejaVu Sans,Liberation Sans,sans-serif" font-weight="400" font-size="7" fill="#a000a0" text-anchor="middle">5</text>
<text transform="translate(746,229.6) rotate(-90)" font-family="DejaVu Sans,Liberation Sans,sans-serif" font-weight="400" font-size="7" fill="#a000a0" text-anchor="middle">4</text>
<text transform="translate(746,244.7) rotate(-90)" font-family="DejaVu Sans,Liberation Sans,sans-serif" font-weight="400" font-size="7" fill="#a000a0" text-anchor="middle">3</text>
<text transform="translate(746,259.9) rotate(-90)" font-family="DejaVu Sans,Liberation Sans,sans-serif" font-weight="400" font-size="7" fill="#a000a0" text-anchor="middle">2</text>
<text transform="translate(746,274.8) rotate(-90)" font-family="DejaVu Sans,Liberation Sans,sans-serif" font-weight="400" font-size="7" fill="#a000a0" text-anchor="middle">1</text>
<text transform="translate(746,297.400) rotate(-90)" font-family="DejaVu Sans,Liberation Sans,sans-serif" font-weight="400" font-size="6.600" fill="#a000a0" text-anchor="middle">MOD</text>
<text transform="translate(745,322.400) rotate(-90)" font-family="DejaVu Sans,Liberation Sans,sans-serif" font-weight="400" font-size="4.500" fill="#a000a0" text-anchor="middle">S</text>
<text transform="translate(745,332.600) rotate(-90)" font-family="DejaVu Sans,Liberation Sans,sans-serif" font-weight="400" font-size="4.500" fill="#a000a0" text-anchor="middle">T</text>
<text transform="translate(733.600,343.500) rotate(-90)" font-family="DejaVu Sans,Liberation Sans,sans-serif" font-weight="400" font-size="6" fill="#a000a0">AD</text>
<text transform="translate(733.600,405.400) rotate(-90)" font-family="DejaVu Sans,Liberation Sans,sans-serif" font-weight="400" font-size="6.200" fill="#a000a0" textLength="50" lengthAdjust="spacingAndGlyphs">17-07-2018</text>
<text transform="translate(741.800,360) rotate(90)" font-family="Liberation Sans,sans-serif" font-weight="bold" font-size="6" fill="#ffffd8" textLength="45.400" lengthAdjust="spacingAndGlyphs">Fabre\N.02</text>
<text transform="translate(799.800,308.200) rotate(90)" font-family="Liberation Sans,sans-serif" font-weight="bold" font-size="6" fill="#ffffd8" textLength="45" lengthAdjust="spacingAndGlyphs">Fabre<tspan fill="#c8c800">\N</tspan>.02</text>
<text x="569.5" y="313" font-family="Liberation Sans,sans-serif" font-weight="bold" font-size="4.200" fill="#ffffd0">R217</text>
<text x="570" y="351.5" font-family="Liberation Sans,sans-serif" font-weight="bold" font-size="4.200" fill="#ffffd0">0R1</text>
<text x="552.5" y="383" font-family="Liberation Sans,sans-serif" font-weight="bold" font-size="4.200" fill="#ffffd0">0R17</text>
<g font-family="DejaVu Sans,Liberation Sans,sans-serif" font-weight="200" fill="#b2b2b2" stroke="#b2b2b2" stroke-width=".3" font-size="14">
<text x="353.500" y="537.800" textLength="70" lengthAdjust="spacingAndGlyphs">Drill Map:</text>
<text x="353" y="557.8" textLength="57.300" lengthAdjust="spacingAndGlyphs">3.50mm</text>
<text x="421" y="557.8" textLength="8" lengthAdjust="spacingAndGlyphs">/</text>
<text x="437.800" y="557.8" textLength="50.500" lengthAdjust="spacingAndGlyphs">0.138"</text>
<text x="496.500" y="557.8" textLength="14" lengthAdjust="spacingAndGlyphs">(3</text>
<text x="518.5" y="557.8" textLength="44" lengthAdjust="spacingAndGlyphs">holes)</text>
<text x="572.900" y="557.8" textLength="89" lengthAdjust="spacingAndGlyphs">(not plated)</text>
<text x="353" y="557.8" textLength="57.300" lengthAdjust="spacingAndGlyphs" fill-opacity=".75">0.50mm</text>
<text x="421" y="557.8" textLength="8" lengthAdjust="spacingAndGlyphs" fill-opacity=".75">/</text>
<text x="437.800" y="557.8" textLength="50.500" lengthAdjust="spacingAndGlyphs" fill-opacity=".75">0.016"</text>
<text x="496.500" y="557.8" textLength="14" lengthAdjust="spacingAndGlyphs" fill-opacity=".75">(2</text>
<text x="518.5" y="557.8" textLength="44" lengthAdjust="spacingAndGlyphs" fill-opacity=".75">holes)</text>
<text x="353" y="571" textLength="57.300" lengthAdjust="spacingAndGlyphs">0.70mm</text>
<text x="421" y="571" textLength="8" lengthAdjust="spacingAndGlyphs">/</text>
<text x="437.800" y="571" textLength="50.500" lengthAdjust="spacingAndGlyphs">0.028"</text>
<text x="496.500" y="571" textLength="23.500" lengthAdjust="spacingAndGlyphs">(14</text>
<text x="529" y="571" textLength="44" lengthAdjust="spacingAndGlyphs">holes)</text>
<text x="353" y="584.2" textLength="57.300" lengthAdjust="spacingAndGlyphs">0.80mm</text>
<text x="421" y="584.2" textLength="8" lengthAdjust="spacingAndGlyphs">/</text>
<text x="437.800" y="584.2" textLength="50.500" lengthAdjust="spacingAndGlyphs">0.031"</text>
<text x="496.500" y="584.2" textLength="23.500" lengthAdjust="spacingAndGlyphs">(16</text>
<text x="529" y="584.2" textLength="44" lengthAdjust="spacingAndGlyphs">holes)</text>
<text x="353" y="597.4" textLength="57.300" lengthAdjust="spacingAndGlyphs">0.90mm</text>
<text x="421" y="597.4" textLength="8" lengthAdjust="spacingAndGlyphs">/</text>
<text x="437.800" y="597.4" textLength="50.500" lengthAdjust="spacingAndGlyphs">0.035"</text>
<text x="496.500" y="597.4" textLength="14" lengthAdjust="spacingAndGlyphs">(3</text>
<text x="518.5" y="597.4" textLength="44" lengthAdjust="spacingAndGlyphs">holes)</text>
<text x="353" y="610.6" textLength="57.300" lengthAdjust="spacingAndGlyphs">1.00mm</text>
<text x="421" y="610.6" textLength="8" lengthAdjust="spacingAndGlyphs">/</text>
<text x="437.800" y="610.6" textLength="50.500" lengthAdjust="spacingAndGlyphs">0.039"</text>
<text x="496.500" y="610.6" textLength="14" lengthAdjust="spacingAndGlyphs">(7</text>
<text x="518.5" y="610.6" textLength="44" lengthAdjust="spacingAndGlyphs">holes)</text>
<text x="353" y="623.8" textLength="57.300" lengthAdjust="spacingAndGlyphs">1.10mm</text>
<text x="421" y="623.8" textLength="8" lengthAdjust="spacingAndGlyphs">/</text>
<text x="437.800" y="623.8" textLength="50.500" lengthAdjust="spacingAndGlyphs">0.043"</text>
<text x="496.500" y="623.8" textLength="14" lengthAdjust="spacingAndGlyphs">(2</text>
<text x="518.5" y="623.8" textLength="44" lengthAdjust="spacingAndGlyphs">holes)</text>
<text x="353" y="637" textLength="57.300" lengthAdjust="spacingAndGlyphs">1.30mm</text>
<text x="421" y="637" textLength="8" lengthAdjust="spacingAndGlyphs">/</text>
<text x="437.800" y="637" textLength="50.500" lengthAdjust="spacingAndGlyphs">0.051"</text>
<text x="496.500" y="637" textLength="14" lengthAdjust="spacingAndGlyphs">(4</text>
<text x="518.5" y="637" textLength="44" lengthAdjust="spacingAndGlyphs">holes)</text>
<text x="353" y="650.2" textLength="57.300" lengthAdjust="spacingAndGlyphs">1.40mm</text>
<text x="421" y="650.2" textLength="8" lengthAdjust="spacingAndGlyphs">/</text>
<text x="437.800" y="650.2" textLength="50.500" lengthAdjust="spacingAndGlyphs">0.055"</text>
<text x="496.500" y="650.2" textLength="23.500" lengthAdjust="spacingAndGlyphs">(24</text>
<text x="529" y="650.2" textLength="44" lengthAdjust="spacingAndGlyphs">holes)</text>
<text x="353" y="663.4" textLength="57.300" lengthAdjust="spacingAndGlyphs">1.50mm</text>
<text x="421" y="663.4" textLength="8" lengthAdjust="spacingAndGlyphs">/</text>
<text x="437.800" y="663.4" textLength="50.500" lengthAdjust="spacingAndGlyphs">0.059"</text>
<text x="496.500" y="663.4" textLength="14" lengthAdjust="spacingAndGlyphs">(8</text>
<text x="518.5" y="663.4" textLength="44" lengthAdjust="spacingAndGlyphs">holes)</text>
<text x="353" y="676.6" textLength="57.300" lengthAdjust="spacingAndGlyphs">3.50mm</text>
<text x="421" y="676.6" textLength="8" lengthAdjust="spacingAndGlyphs">/</text>
<text x="437.800" y="676.6" textLength="50.500" lengthAdjust="spacingAndGlyphs">0.138"</text>
<text x="496.500" y="676.6" textLength="14" lengthAdjust="spacingAndGlyphs">(1</text>
<text x="518.5" y="676.6" textLength="36" lengthAdjust="spacingAndGlyphs">hole)</text>
</g>
<g stroke="#b8b8b8" stroke-width=".9" fill="none">
<path d="M334 547.700l11.600 11.600M345.600 547.700l-11.600 11.600"/>
<circle cx="344.300" cy="566.800" r=".500" fill="#b8b8b8"/>
<path d="M344.300 578.800l1.200 2h-2.400z" fill="#b8b8b8"/>
<rect x="343.100" y="591.800" width="2.400" height="2.400"/>
<path d="M344.300 604.300l1.700 1.700-1.700 1.700-1.700-1.700z" fill="#b8b8b8"/>
<rect x="342.300" y="617.4" width="3.600" height="3.600"/><path d="M342.300 617.4l3.600 3.600M345.900 617.4l-3.600 3.600"/>
<rect x="342.300" y="630.6" width="3.600" height="3.600"/><path d="M342.300 630.6l3.600 3.600M345.900 630.6l-3.600 3.600"/>
<rect x="342.300" y="643.8" width="3.600" height="3.600"/><path d="M342.300 643.8l3.600 3.600M345.900 643.8l-3.600 3.600"/>
<rect x="342.300" y="657" width="3.600" height="3.600"/><path d="M342.300 657l3.600 3.600M345.900 657l-3.600 3.600"/>
<circle cx="339.300" cy="671.300" r="5.500"/><path d="M332.800 671.300h13M339.300 664.800v13"/>
</g>
</svg>
<!-- ===== canvas scrollbars ===== -->
<div class="a" style="left:1097px;top:79px;width:12.500px;height:614px;background:#f0f0f0;border-left:1px solid #fff;box-sizing:border-box"></div>
<div class="a" style="left:1098px;top:401px;width:10px;height:133.500px;box-sizing:border-box;border:1px solid #9a9a9a;border-radius:1.500px;background:linear-gradient(90deg,#f4f4f4 0,#e6e6e8 45%,#cfcfd3 55%,#d8d8dc 100%)"></div>
<svg style="left:1097px;top:79px" width="13" height="628" viewBox="1097 79 13 628"><path d="M1100.200 87.300l3-3.200 3 3.200z" fill="#333"/><path d="M1100.200 686.600l3 3.200 3-3.200z" fill="#333"/><path d="M1100.800 465.800h4.600M1100.800 467.600h4.600M1100.800 469.400h4.600" stroke="#555" stroke-width=".8"/></svg>
<div class="a" style="left:31px;top:693.900px;width:1066px;height:12.600px;background:#f0f0f0;border-top:1px solid #fff;box-sizing:border-box"></div>
<div class="a" style="left:534px;top:695px;width:412px;height:10.500px;box-sizing:border-box;border:1px solid #9a9a9a;border-radius:1.500px;background:linear-gradient(180deg,#f4f4f4 0,#e6e6e8 45%,#cfcfd3 55%,#d8d8dc 100%)"></div>
<svg style="left:31px;top:693px" width="1066" height="14" viewBox="31 693 1066 14"><path d="M35.800 700.200l3.200 -2.800v5.600z" fill="#333"/><path d="M1092 700.200l-3.200 -2.800v5.600z" fill="#333"/><path d="M738.300 698v4.400M740.100 698v4.400M741.900 698v4.400" stroke="#555" stroke-width=".8"/></svg>
<div class="a" style="left:1097px;top:693px;width:13px;height:14px;background:#f0f0f0"></div>
<div class="a" style="left:1109.500px;top:79px;width:1px;height:628px;background:#8c8c8c"></div>
<div class="a" style="left:1110.500px;top:79px;width:3px;height:628px;background:linear-gradient(90deg,#d6d6d6,#ececec)"></div>
<!-- ===== visibles panel ===== -->
<div class="a" style="left:1113.500px;top:79px;width:266.500px;height:628px;background:#f0f0f0;border-left:1px solid #fdfdfd;box-sizing:border-box"></div>
<div class="a" style="left:1114px;top:78.500px;width:266px;height:12.500px;background:linear-gradient(180deg,#aeaeae 0,#cacaca 12%,#d3d3d3 40%,#e4e4e4 100%)"></div>
<div class="t" style="left:1116.300px;top:80.600px;font-size:8.200px">Visibles</div>
<div class="a" style="left:1117.500px;top:95.500px;width:260.500px;height:608px;box-sizing:border-box;border:1px solid #ababab;background:#f0f0f0"></div>
<div class="a" style="left:1118.500px;top:96.500px;width:258.500px;height:16px;background:linear-gradient(180deg,#c2c2c2 0,#d2d2d2 35%,#ececec 100%)"></div>
<div class="a" style="left:1118.500px;top:112.300px;width:258.500px;height:1px;background:#a6a6a6"></div>
<div class="a" style="left:1118.500px;top:114.300px;width:258.500px;height:1px;background:#bcbcbc"></div>
<div class="a" style="left:1157px;top:99.500px;width:32.500px;height:13px;box-sizing:border-box;border:1px solid #a5a5a5;border-bottom:none;border-radius:1.500px 1.500px 0 0;background:linear-gradient(180deg,#f2f2f2 0,#ebebeb 50%,#dddddd 51%,#d2d2d2 100%)"></div>
<div class="a" style="left:1122.500px;top:98px;width:35px;height:15.300px;box-sizing:border-box;border:1px solid #a5a5a5;border-bottom:none;background:linear-gradient(180deg,#fff,#f8f8f8 80%,#f2f2f2);border-radius:1.500px 1.500px 0 0"></div>
<div class="t" style="left:1128px;top:101px;font-size:8.300px">Layers</div>
<div class="t" style="left:1162.800px;top:101.300px;font-size:8.300px">Items</div>
<svg style="left:1120px;top:114px" width="260" height="372" viewBox="1120 114 260 372">
<path d="M1122.60 120.25l1.600 1.600-1.600 1.600-1.600-1.600z" fill="#5166ff"/>
<rect x="1128.500" y="118.45" width="9.800" height="7.300" fill="#ffffc2" stroke="#1a1a1a" stroke-width=".9"/>
<rect x="1139.800" y="118.05" width="8.200" height="8.200" rx="1" fill="#f4f4f4" stroke="#8c8c8c" stroke-width=".9"/>
<path d="M1141.700 122.15l1.700 2.600 2.900-5.700" fill="none" stroke="#2f3f8f" stroke-width="1.400"/>
<path d="M1122.60 131.74l1.600 1.600-1.600 1.600-1.600-1.600z" fill="#5166ff"/>
<rect x="1128.500" y="129.94" width="9.800" height="7.300" fill="#ffffff" stroke="#1a1a1a" stroke-width=".9"/>
<rect x="1139.800" y="129.54" width="8.200" height="8.200" rx="1" fill="#f4f4f4" stroke="#8c8c8c" stroke-width=".9"/>
<path d="M1141.700 133.64l1.700 2.600 2.900-5.700" fill="none" stroke="#2f3f8f" stroke-width="1.400"/>
<path d="M1122.60 143.22l1.600 1.600-1.600 1.600-1.600-1.600z" fill="#5166ff"/>
<rect x="1128.500" y="141.42" width="9.800" height="7.300" fill="#c2c2c2" stroke="#1a1a1a" stroke-width=".9"/>
<rect x="1139.800" y="141.02" width="8.200" height="8.200" rx="1" fill="#f4f4f4" stroke="#8c8c8c" stroke-width=".9"/>
<path d="M1141.700 145.12l1.700 2.600 2.900-5.700" fill="none" stroke="#2f3f8f" stroke-width="1.400"/>
<path d="M1122.60 154.71l1.600 1.600-1.600 1.600-1.600-1.600z" fill="#5166ff"/>
<rect x="1128.500" y="152.91" width="9.800" height="7.300" fill="#840084" stroke="#1a1a1a" stroke-width=".9"/>
<rect x="1139.800" y="152.51" width="8.200" height="8.200" rx="1" fill="#f4f4f4" stroke="#8c8c8c" stroke-width=".9"/>
<path d="M1141.700 156.61l1.700 2.600 2.900-5.700" fill="none" stroke="#2f3f8f" stroke-width="1.400"/>
<path d="M1122.60 166.20l1.600 1.600-1.600 1.600-1.600-1.600z" fill="#5166ff"/>
<rect x="1128.500" y="164.40" width="9.800" height="7.300" fill="#840000" stroke="#1a1a1a" stroke-width=".9"/>
<rect x="1139.800" y="164.00" width="8.200" height="8.200" rx="1" fill="#f4f4f4" stroke="#8c8c8c" stroke-width=".9"/>
<path d="M1141.700 168.10l1.700 2.600 2.900-5.700" fill="none" stroke="#2f3f8f" stroke-width="1.400"/>
<path d="M1122.60 177.69l1.600 1.600-1.600 1.600-1.600-1.600z" fill="#5166ff"/>
<rect x="1128.500" y="175.88" width="9.800" height="7.300" fill="#004a00" stroke="#1a1a1a" stroke-width=".9"/>
<rect x="1139.800" y="175.48" width="8.200" height="8.200" rx="1" fill="#f4f4f4" stroke="#8c8c8c" stroke-width=".9"/>
<path d="M1141.700 179.59l1.700 2.600 2.900-5.700" fill="none" stroke="#2f3f8f" stroke-width="1.400"/>
<path d="M1122.60 189.17l1.600 1.600-1.600 1.600-1.600-1.600z" fill="#5166ff"/>
<rect x="1128.500" y="187.37" width="9.800" height="7.300" fill="#848400" stroke="#1a1a1a" stroke-width=".9"/>
<rect x="1139.800" y="186.97" width="8.200" height="8.200" rx="1" fill="#f4f4f4" stroke="#8c8c8c" stroke-width=".9"/>
<path d="M1141.700 191.07l1.700 2.600 2.900-5.700" fill="none" stroke="#2f3f8f" stroke-width="1.400"/>
<path d="M1122.60 200.66l1.600 1.600-1.600 1.600-1.600-1.600z" fill="#5166ff"/>
<rect x="1128.500" y="198.86" width="9.800" height="7.300" fill="#840084" stroke="#1a1a1a" stroke-width=".9"/>
<rect x="1139.800" y="198.46" width="8.200" height="8.200" rx="1" fill="#f4f4f4" stroke="#8c8c8c" stroke-width=".9"/>
<path d="M1141.700 202.56l1.700 2.600 2.900-5.700" fill="none" stroke="#2f3f8f" stroke-width="1.400"/>
<path d="M1122.60 212.15l1.600 1.600-1.600 1.600-1.600-1.600z" fill="#5166ff"/>
<rect x="1128.500" y="210.35" width="9.800" height="7.300" fill="#c2c2c2" stroke="#1a1a1a" stroke-width=".9"/>
<rect x="1139.800" y="209.95" width="8.200" height="8.200" rx="1" fill="#f4f4f4" stroke="#8c8c8c" stroke-width=".9"/>
<path d="M1141.700 214.05l1.700 2.600 2.900-5.700" fill="none" stroke="#2f3f8f" stroke-width="1.400"/>
<path d="M1123.800 222.43v6l3.200-3z" fill="#2a3cff"/>
<rect x="1128.500" y="221.83" width="9.800" height="7.300" fill="#000084" stroke="#1a1a1a" stroke-width=".9"/>
<rect x="1139.800" y="221.43" width="8.200" height="8.200" rx="1" fill="#f4f4f4" stroke="#8c8c8c" stroke-width=".9"/>
<rect x="1128.500" y="233.32" width="9.800" height="7.300" fill="#008400" stroke="#1a1a1a" stroke-width=".9"/>
<rect x="1139.800" y="232.92" width="8.200" height="8.200" rx="1" fill="#f4f4f4" stroke="#8c8c8c" stroke-width=".9"/>
<rect x="1128.500" y="244.81" width="9.800" height="7.300" fill="#008484" stroke="#1a1a1a" stroke-width=".9"/>
<rect x="1139.800" y="244.41" width="8.200" height="8.200" rx="1" fill="#f4f4f4" stroke="#8c8c8c" stroke-width=".9"/>
<rect x="1128.500" y="256.29" width="9.800" height="7.300" fill="#c20000" stroke="#1a1a1a" stroke-width=".9"/>
<rect x="1139.800" y="255.89" width="8.200" height="8.200" rx="1" fill="#f4f4f4" stroke="#8c8c8c" stroke-width=".9"/>
<path d="M1141.700 259.99l1.700 2.600 2.900-5.700" fill="none" stroke="#2f3f8f" stroke-width="1.400"/>
<rect x="1128.500" y="267.78" width="9.800" height="7.300" fill="#c200c2" stroke="#1a1a1a" stroke-width=".9"/>
<rect x="1139.800" y="267.38" width="8.200" height="8.200" rx="1" fill="#f4f4f4" stroke="#8c8c8c" stroke-width=".9"/>
<path d="M1141.700 271.48l1.700 2.600 2.900-5.700" fill="none" stroke="#2f3f8f" stroke-width="1.400"/>
<rect x="1128.500" y="279.27" width="9.800" height="7.300" fill="#c2c200" stroke="#1a1a1a" stroke-width=".9"/>
<rect x="1139.800" y="278.87" width="8.200" height="8.200" rx="1" fill="#f4f4f4" stroke="#8c8c8c" stroke-width=".9"/>
<path d="M1141.700 282.97l1.700 2.600 2.900-5.700" fill="none" stroke="#2f3f8f" stroke-width="1.400"/>
<rect x="1128.500" y="290.75" width="9.800" height="7.300" fill="#840000" stroke="#1a1a1a" stroke-width=".9"/>
<rect x="1139.800" y="290.35" width="8.200" height="8.200" rx="1" fill="#f4f4f4" stroke="#8c8c8c" stroke-width=".9"/>
<path d="M1141.700 294.45l1.700 2.600 2.900-5.700" fill="none" stroke="#2f3f8f" stroke-width="1.400"/>
<rect x="1128.500" y="302.24" width="9.800" height="7.300" fill="#000084" stroke="#1a1a1a" stroke-width=".9"/>
<rect x="1139.800" y="301.84" width="8.200" height="8.200" rx="1" fill="#f4f4f4" stroke="#8c8c8c" stroke-width=".9"/>
<path d="M1141.700 305.94l1.700 2.600 2.900-5.700" fill="none" stroke="#2f3f8f" stroke-width="1.400"/>
<rect x="1128.500" y="313.73" width="9.800" height="7.300" fill="#848400" stroke="#1a1a1a" stroke-width=".9"/>
<rect x="1139.800" y="313.33" width="8.200" height="8.200" rx="1" fill="#f4f4f4" stroke="#8c8c8c" stroke-width=".9"/>
<path d="M1141.700 317.43l1.700 2.600 2.900-5.700" fill="none" stroke="#2f3f8f" stroke-width="1.400"/>
<rect x="1128.500" y="325.22" width="9.800" height="7.300" fill="#00c2c2" stroke="#1a1a1a" stroke-width=".9"/>
<rect x="1139.800" y="324.82" width="8.200" height="8.200" rx="1" fill="#f4f4f4" stroke="#8c8c8c" stroke-width=".9"/>
<path d="M1141.700 328.92l1.700 2.600 2.900-5.700" fill="none" stroke="#2f3f8f" stroke-width="1.400"/>
<rect x="1128.500" y="336.70" width="9.800" height="7.300" fill="#840000" stroke="#1a1a1a" stroke-width=".9"/>
<rect x="1139.800" y="336.30" width="8.200" height="8.200" rx="1" fill="#f4f4f4" stroke="#8c8c8c" stroke-width=".9"/>
<path d="M1141.700 340.40l1.700 2.600 2.900-5.700" fill="none" stroke="#2f3f8f" stroke-width="1.400"/>
<rect x="1128.500" y="348.19" width="9.800" height="7.300" fill="#840084" stroke="#1a1a1a" stroke-width=".9"/>
<rect x="1139.800" y="347.79" width="8.200" height="8.200" rx="1" fill="#f4f4f4" stroke="#8c8c8c" stroke-width=".9"/>
<path d="M1141.700 351.89l1.700 2.600 2.900-5.700" fill="none" stroke="#2f3f8f" stroke-width="1.400"/>
<rect x="1128.500" y="359.68" width="9.800" height="7.300" fill="#008484" stroke="#1a1a1a" stroke-width=".9"/>
<rect x="1139.800" y="359.28" width="8.200" height="8.200" rx="1" fill="#f4f4f4" stroke="#8c8c8c" stroke-width=".9"/>
<path d="M1141.700 363.38l1.700 2.600 2.900-5.700" fill="none" stroke="#2f3f8f" stroke-width="1.400"/>
<rect x="1128.500" y="371.16" width="9.800" height="7.300" fill="#848400" stroke="#1a1a1a" stroke-width=".9"/>
<rect x="1139.800" y="370.76" width="8.200" height="8.200" rx="1" fill="#f4f4f4" stroke="#8c8c8c" stroke-width=".9"/>
<path d="M1141.700 374.86l1.700 2.600 2.900-5.700" fill="none" stroke="#2f3f8f" stroke-width="1.400"/>
<rect x="1128.500" y="382.65" width="9.800" height="7.300" fill="#840084" stroke="#1a1a1a" stroke-width=".9"/>
<rect x="1139.800" y="382.25" width="8.200" height="8.200" rx="1" fill="#f4f4f4" stroke="#8c8c8c" stroke-width=".9"/>
<path d="M1141.700 386.35l1.700 2.600 2.900-5.700" fill="none" stroke="#2f3f8f" stroke-width="1.400"/>
<rect x="1128.500" y="394.14" width="9.800" height="7.300" fill="#c2c2c2" stroke="#1a1a1a" stroke-width=".9"/>
<rect x="1139.800" y="393.74" width="8.200" height="8.200" rx="1" fill="#f4f4f4" stroke="#8c8c8c" stroke-width=".9"/>
<path d="M1141.700 397.84l1.700 2.600 2.900-5.700" fill="none" stroke="#2f3f8f" stroke-width="1.400"/>
<rect x="1128.500" y="405.62" width="9.800" height="7.300" fill="#000084" stroke="#1a1a1a" stroke-width=".9"/>
<rect x="1139.800" y="405.22" width="8.200" height="8.200" rx="1" fill="#f4f4f4" stroke="#8c8c8c" stroke-width=".9"/>
<path d="M1141.700 409.32l1.700 2.600 2.900-5.700" fill="none" stroke="#2f3f8f" stroke-width="1.400"/>
<rect x="1128.500" y="417.11" width="9.800" height="7.300" fill="#008400" stroke="#1a1a1a" stroke-width=".9"/>
<rect x="1139.800" y="416.71" width="8.200" height="8.200" rx="1" fill="#f4f4f4" stroke="#8c8c8c" stroke-width=".9"/>
<path d="M1141.700 420.81l1.700 2.600 2.900-5.700" fill="none" stroke="#2f3f8f" stroke-width="1.400"/>
<rect x="1128.500" y="428.60" width="9.800" height="7.300" fill="#004848" stroke="#1a1a1a" stroke-width=".9"/>
<rect x="1139.800" y="428.20" width="8.200" height="8.200" rx="1" fill="#f4f4f4" stroke="#8c8c8c" stroke-width=".9"/>
<path d="M1141.700 432.30l1.700 2.600 2.900-5.700" fill="none" stroke="#2f3f8f" stroke-width="1.400"/>
<rect x="1128.500" y="440.09" width="9.800" height="7.300" fill="#c2c200" stroke="#1a1a1a" stroke-width=".9"/>
<rect x="1139.800" y="439.69" width="8.200" height="8.200" rx="1" fill="#f4f4f4" stroke="#8c8c8c" stroke-width=".9"/>
<path d="M1141.700 443.79l1.700 2.600 2.900-5.700" fill="none" stroke="#2f3f8f" stroke-width="1.400"/>
<rect x="1128.500" y="451.57" width="9.800" height="7.300" fill="#c200c2" stroke="#1a1a1a" stroke-width=".9"/>
<rect x="1139.800" y="451.17" width="8.200" height="8.200" rx="1" fill="#f4f4f4" stroke="#8c8c8c" stroke-width=".9"/>
<path d="M1141.700 455.27l1.700 2.600 2.900-5.700" fill="none" stroke="#2f3f8f" stroke-width="1.400"/>
<rect x="1128.500" y="463.06" width="9.800" height="7.300" fill="#c2c200" stroke="#1a1a1a" stroke-width=".9"/>
<rect x="1139.800" y="462.66" width="8.200" height="8.200" rx="1" fill="#f4f4f4" stroke="#8c8c8c" stroke-width=".9"/>
<path d="M1141.700 466.76l1.700 2.600 2.900-5.700" fill="none" stroke="#2f3f8f" stroke-width="1.400"/>
<rect x="1128.500" y="474.55" width="9.800" height="7.300" fill="#c2c2c2" stroke="#1a1a1a" stroke-width=".9"/>
<rect x="1139.800" y="474.15" width="8.200" height="8.200" rx="1" fill="#f4f4f4" stroke="#8c8c8c" stroke-width=".9"/>
<path d="M1141.700 478.25l1.700 2.600 2.900-5.700" fill="none" stroke="#2f3f8f" stroke-width="1.400"/>
</svg>
<div class="t" style="left:1150.4px;top:117.05px;font-size:8.45px">1 Ca...trol Monitor PCB-B.Cu.gbl (Copper, L2)</div>
<div class="t" style="left:1150.4px;top:128.54px;font-size:8.45px">2 Ca...ol Monitor PCB-B.Mask.gbs (Soldermask, Bot)</div>
<div class="t" style="left:1150.4px;top:140.02px;font-size:8.45px">3 Ca...l Monitor PCB-drl_map.gbr</div>
<div class="t" style="left:1150.4px;top:151.51px;font-size:8.45px">4 Ca...Monitor PCB-Dwgs.User.gbr (Drawing, )</div>
<div class="t" style="left:1150.4px;top:163.00px;font-size:8.45px">5 Ca...Monitor PCB-Edge.Cuts.gm1 (Profile, NP)</div>
<div class="t" style="left:1150.4px;top:174.48px;font-size:8.45px">6 Ca...trol Monitor PCB-F.Cu.gtl (Copper, L1)</div>
<div class="t" style="left:1150.4px;top:185.97px;font-size:8.45px">7 Ca...ol Monitor PCB-F.Mask.gts (Soldermask, Top)</div>
<div class="t" style="left:1150.4px;top:197.46px;font-size:8.45px">8 Ca...l Monitor PCB-F.SilkS.gto (Legend, Top)</div>
<div class="t" style="left:1150.4px;top:208.95px;font-size:8.45px">9 Ca...itor PCB-NPTH-drl_map.gbr</div>
<div class="t" style="left:1150.4px;top:220.43px;font-size:8.30px">Graphic layer 10</div>
<div class="t" style="left:1150.4px;top:231.92px;font-size:8.30px">Graphic layer 11</div>
<div class="t" style="left:1150.4px;top:243.41px;font-size:8.30px">Graphic layer 12</div>
<div class="t" style="left:1150.4px;top:254.89px;font-size:8.30px">Graphic layer 13</div>
<div class="t" style="left:1150.4px;top:266.38px;font-size:8.30px">Graphic layer 14</div>
<div class="t" style="left:1150.4px;top:277.87px;font-size:8.30px">Graphic layer 15</div>
<div class="t" style="left:1150.4px;top:289.35px;font-size:8.30px">Graphic layer 16</div>
<div class="t" style="left:1150.4px;top:300.84px;font-size:8.30px">Graphic layer 17</div>
<div class="t" style="left:1150.4px;top:312.33px;font-size:8.30px">Graphic layer 18</div>
<div class="t" style="left:1150.4px;top:323.82px;font-size:8.30px">Graphic layer 19</div>
<div class="t" style="left:1150.4px;top:335.30px;font-size:8.30px">Graphic layer 20</div>
<div class="t" style="left:1150.4px;top:346.79px;font-size:8.30px">Graphic layer 21</div>
<div class="t" style="left:1150.4px;top:358.28px;font-size:8.30px">Graphic layer 22</div>
<div class="t" style="left:1150.4px;top:369.76px;font-size:8.30px">Graphic layer 23</div>
<div class="t" style="left:1150.4px;top:381.25px;font-size:8.30px">Graphic layer 24</div>
<div class="t" style="left:1150.4px;top:392.74px;font-size:8.30px">Graphic layer 25</div>
<div class="t" style="left:1150.4px;top:404.22px;font-size:8.30px">Graphic layer 26</div>
<div class="t" style="left:1150.4px;top:415.71px;font-size:8.30px">Graphic layer 27</div>
<div class="t" style="left:1150.4px;top:427.20px;font-size:8.30px">Graphic layer 28</div>
<div class="t" style="left:1150.4px;top:438.69px;font-size:8.30px">Graphic layer 29</div>
<div class="t" style="left:1150.4px;top:450.17px;font-size:8.30px">Graphic layer 30</div>
<div class="t" style="left:1150.4px;top:461.66px;font-size:8.30px">Graphic layer 31</div>
<div class="t" style="left:1150.4px;top:473.15px;font-size:8.30px">Graphic layer 32</div>
<!-- ===== message panel / status bar ===== -->
<div class="a" style="left:1px;top:707px;width:1379px;height:24px;background:#f0f0f0;border-top:1px solid #a9a9a9;box-sizing:border-box"></div>
<div class="a" style="left:1px;top:730px;width:1379px;height:1.500px;background:#a0a0a0"></div>
<div class="a" style="left:1px;top:731.500px;width:1379px;height:16px;background:#f0eded"></div>
<div class="a" style="left:855px;top:733px;width:1px;height:13px;background:#d4d0d0"></div>
<div class="a" style="left:903px;top:733px;width:1px;height:13px;background:#d4d0d0"></div>
<div class="a" style="left:1025px;top:733px;width:1px;height:13px;background:#d4d0d0"></div>
<div class="a" style="left:1212px;top:733px;width:1px;height:13px;background:#d4d0d0"></div>
<div class="a" style="left:1253px;top:733px;width:1px;height:13px;background:#d4d0d0"></div>
<div class="t" style="left:859.500px;top:735px;font-size:7.900px">Z 12.83</div>
<div class="t" style="left:907px;top:735px;font-size:7.900px">X 9.600000  Y 4.000000</div>
<div class="t" style="left:1030px;top:735px;font-size:7.900px">dx 9.600000  dy 4.000000  dist 10.4000</div>
<div class="t" style="left:1217.500px;top:735px;font-size:7.900px">Inches</div>
<div class="a" style="left:1px;top:746px;width:1379px;height:1.500px;background:#fbfbfb"></div>
<!-- ===== taskbar ===== -->
<div class="a" id="taskbar" style="left:0;top:747.500px;width:1380px;height:28.500px;background:linear-gradient(90deg,#5f5856 0,#6a6361 9%,#736c6a 12.500%,#645e5c 16%,#5c5755 30%,#666462 38%,#6e6c6a 50%,#787775 56%,#8b8a89 59.500%,#6c6c6b 62%,#3e3e3e 64.500%,#2b2b2c 68%,#3a3a3a 70.500%,#2c2c2d 74%,#262627 88%,#2a2a2c 100%)"></div><div class="a" style="left:0;top:747.500px;width:1380px;height:28.500px;background:linear-gradient(180deg,rgba(255,255,255,.10) 0,rgba(255,255,255,0) 35%,rgba(0,0,0,.12) 100%)"></div>
<div class="a" style="left:0;top:747.500px;width:1380px;height:1px;background:#8a8583"></div>
<div class="a" style="left:1180px;top:748.500px;width:200px;height:27.500px;background:linear-gradient(90deg,rgba(42,42,44,0) 0,#2a2a2c 25%,#2c2a2c 45%,#3a2c30 60%,#4a3237 80%,#4e3439 100%)"></div>
<div class="a" style="left:1371.500px;top:748.500px;width:8.500px;height:27.500px;box-sizing:border-box;border-left:1px solid #7a5a60;background:linear-gradient(180deg,#6a4a50,#533a40 40%,#4a3036)"></div>
<svg style="left:0;top:747px" width="1380" height="29" viewBox="0 747 1380 29">
  <defs>
    <radialGradient id="orb" cx=".5" cy=".35" r=".7"><stop offset="0" stop-color="#8fd0f4"/><stop offset=".45" stop-color="#2a7fc0"/><stop offset=".8" stop-color="#0e4f8c"/><stop offset="1" stop-color="#1aa0d8"/></radialGradient>
    <linearGradient id="btn" x1="0" y1="0" x2="0" y2="1"><stop offset="0" stop-color="#a9a5a3"/><stop offset=".48" stop-color="#8d8987"/><stop offset=".52" stop-color="#6f6b6a"/><stop offset="1" stop-color="#858180"/></linearGradient>
    <linearGradient id="btn2" x1="0" y1="0" x2="0" y2="1"><stop offset="0" stop-color="#cfcdcc"/><stop offset=".48" stop-color="#b3b1b0"/><stop offset=".52" stop-color="#8e8c8b"/><stop offset="1" stop-color="#a8a6a5"/></linearGradient>
    <linearGradient id="fold" x1="0" y1="0" x2="0" y2="1"><stop offset="0" stop-color="#fbe9a0"/><stop offset="1" stop-color="#e9c45a"/></linearGradient>
  </defs>
  <!-- start orb -->
  <circle cx="21.700" cy="762" r="13.400" fill="url(#orb)" stroke="#3a6d96" stroke-width="1"/>
  <ellipse cx="21.700" cy="754.500" rx="9.500" ry="5" fill="#fff" fill-opacity=".22"/>
  <g transform="translate(21.300,762.300) scale(1.250) translate(-21.300,-762.300)">
  <path d="M15.500 757.500q3-1.800 5.600-.6l-1 4.600q-2.800-1-5.700.5z" fill="#f0592a"/>
  <path d="M22.200 757.100q2.800-1.400 5.800-.1l-1.100 4.600q-2.800-1.300-5.700.1z" fill="#8cc63f"/>
  <path d="M14.100 763.200q2.900-1.600 5.700-.5l-1.100 4.700q-2.700-1.200-5.700.4z" fill="#3a9be0"/>
  <path d="M20.900 762.900q2.800-1.400 5.700-.1l-1.100 4.700q-2.800-1.300-5.700.1z" fill="#f9c21c"/>
  </g>
  <!-- green archive -->
  <rect x="56.500" y="750.500" width="18.500" height="20.500" rx="1.500" fill="#3fae1f" stroke="#1f6a10" stroke-width="1"/>
  <rect x="57.500" y="751.500" width="16.500" height="4" fill="#7be04a"/>
  <rect x="58.500" y="756.500" width="15" height="12.500" fill="#103808"/>
  <path d="M60 758.500h6l1.500 1.500h6.500v8.500h-14z" fill="#ecd2b4"/>
  <path d="M60 761.500h14v5.500h-14z" fill="#f6e4cf"/>
  <!-- calculator -->
  <rect x="102.500" y="751.200" width="15.300" height="20.300" rx="1.500" fill="#b9dcf6" stroke="#5f9fd6" stroke-width="1"/>
  <rect x="104.300" y="753" width="11.700" height="5.500" fill="#eef6fd" stroke="#7fb0dc" stroke-width=".6"/>
  <rect x="104.300" y="753" width="11.700" height="1.400" fill="#f0a030"/>
  <g fill="#6fa7d8"><rect x="104.500" y="760.500" width="2.200" height="1.800"/><rect x="107.700" y="760.500" width="2.200" height="1.800"/><rect x="110.900" y="760.500" width="2.200" height="1.800"/><rect x="104.500" y="763.500" width="2.200" height="1.800"/><rect x="107.700" y="763.500" width="2.200" height="1.800"/><rect x="110.900" y="763.500" width="2.200" height="1.800"/><rect x="104.500" y="766.500" width="2.200" height="1.800"/><rect x="107.700" y="766.500" width="2.200" height="1.800"/><rect x="110.900" y="766.500" width="2.200" height="1.800"/></g>
  <rect x="114" y="763.500" width="2" height="5" fill="#f0a030"/>
  <!-- outlook -->
  <path d="M144.500 753l11.500-2.200v21l-11.500-2.200z" fill="#0a64c0"/>
  <rect x="156" y="755.500" width="9.800" height="11" fill="#1a7fe0"/>
  <path d="M157 757h8l-4 4.200z" fill="#fff"/><path d="M157 757.800v7.200h8v-7.200l-4 4.200z" fill="#fff"/>
  <ellipse cx="150.300" cy="761.700" rx="2.600" ry="3.100" fill="none" stroke="#fff" stroke-width="1.500"/>
  <!-- firefox button -->
  <rect x="179.500" y="748.500" width="41.500" height="26" rx="2" fill="url(#btn)" stroke="#c9c6c5" stroke-width="1"/>
  <circle cx="200" cy="761.200" r="10.600" fill="#ff8a16"/>
  <path d="M190 757q2-6 9-7.500q-3 3-1 5.500q3 0 4 2q-3 0-4 2.500q0 3 3 3.800q3 .6 5-1.800q-1 5-6 5.500q-7 0-10-6z" fill="#e2352c"/>
  <circle cx="200.800" cy="760.600" r="4.600" fill="#4a3ad0"/>
  <path d="M203 750q6 3 7 9q0 8-7 11.500q5-5 3.500-11q-1-4-3.500-9.500z" fill="#ffd43a"/>
  <path d="M196 757q3-1 5 1.500q-3 0-3.500 2.500q0 2.500 3 3q-4 1-6-2q-1-3 1.500-5z" fill="#ff5a2a"/>
  <!-- chrome -->
  <circle cx="244.700" cy="761.600" r="10.600" fill="#e23a2e"/>
  <path d="M244.700 761.600l-9.200 5.300a10.600 10.600 0 0 0 9.200 5.300l4.600-8z" fill="#2ba24c"/>
  <path d="M244.700 761.600l-9.200 5.300a10.600 10.600 0 0 1 0-10.600z" fill="#2ba24c"/>
  <path d="M244.700 761.600h10.600a10.600 10.600 0 0 1-10.600 10.600l5.300-9.200z" fill="#fbc116"/>
  <circle cx="244.700" cy="761.600" r="5" fill="#fff"/><circle cx="244.700" cy="761.600" r="3.900" fill="#4a8af4"/>
  <!-- notepad-like -->
  <path d="M279.500 751h12l5.500 5.500v16h-17.500z" fill="#f4f8f0" stroke="#7a9a70" stroke-width=".8"/>
  <rect x="280.500" y="759" width="15.500" height="12.500" fill="#5fc23a"/>
  <rect x="280.500" y="764" width="15.500" height="7.500" fill="#9be070"/>
  <path d="M284 760v8M286.500 763h4" stroke="#234" stroke-width="1.100"/>
  <path d="M289.500 769l1-3.500 7-11.500 2 1.300-7 11.500z" fill="#f2b23a" stroke="#7a4a10" stroke-width=".5"/>
  <!-- pickit -->
  <rect x="322" y="750" width="23" height="22.500" fill="#000"/>
  <text x="322.800" y="760" font-family="Liberation Sans,sans-serif" font-weight="bold" font-size="8.400" fill="#fff" textLength="21.500" lengthAdjust="spacingAndGlyphs">PICkit</text>
  <text x="332" y="771.800" font-family="Liberation Sans,sans-serif" font-weight="bold" font-size="12.500" fill="#e01818" textLength="10" lengthAdjust="spacingAndGlyphs">3</text>
  <!-- explorer button -->
  <rect x="357.500" y="748.500" width="41.500" height="26" rx="2" fill="url(#btn)" stroke="#c9c6c5" stroke-width="1"/>
  <path d="M367.500 754h7l1.500 2h12.500v15.500h-21z" fill="url(#fold)" stroke="#b8922e" stroke-width=".6"/>
  <rect x="370" y="752.500" width="4" height="2" fill="#3cb43c"/><rect x="381" y="753.500" width="4" height="2" fill="#3a8ae0"/><rect x="375" y="753" width="3" height="2" fill="#e04a3a"/>
  <path d="M370 765.500q8-3.500 16 0v6.500h-3.500v-3.500h-9v3.500h-3.500z" fill="#58b0ea"/>
  <!-- kicad pcbnew button -->
  <rect x="402.200" y="748.500" width="38" height="26" rx="2" fill="url(#btn)" stroke="#c9c6c5" stroke-width="1"/>
  <path d="M410 751h16l5.500 5.500v16h-21.500z" fill="#fbf6ea" stroke="#c8961e" stroke-width="1.600"/>
  <path d="M426 751l5.500 5.500h-5.500z" fill="#c8961e"/>
  <path d="M416.500 754v5M416.500 764v6M413 764h12M421 761v8M421 761h6M423 768h6" stroke="#d0622a" stroke-width="1.200" fill="none"/>
  <rect x="415" y="757.500" width="3" height="5" fill="none" stroke="#d0622a" stroke-width="1"/><rect x="423" y="759.500" width="5" height="2.600" rx="1.300" fill="none" stroke="#d0622a" stroke-width="1"/>
  <!-- sep -->
  <path d="M443.500 749v26" stroke="#3a3838" stroke-width="1"/>
  <!-- gerbview button -->
  <rect x="445.700" y="748.500" width="42.500" height="26" rx="2" fill="url(#btn2)" stroke="#e4e2e1" stroke-width="1"/>
  <rect x="456" y="750.800" width="22.500" height="21.700" fill="#111" stroke="#111" stroke-width="1"/>
  <path d="M456 754h6l3 3h4M456 758.500h4l3 3h5M456 763h4M470 751v5h4v-5M475 756h3M466 766v-3h4v-4M473 759v4h5" fill="none" stroke="#f2f2f2" stroke-width="1.300"/>
  <circle cx="469.500" cy="757" r="1.100" fill="#f2f2f2"/><circle cx="468.500" cy="761.500" r="1.100" fill="#f2f2f2"/><circle cx="461" cy="763" r="1.100" fill="#f2f2f2"/>
  <rect x="459" y="765.800" width="19" height="6.500" fill="#111" stroke="#f2f2f2" stroke-width=".7"/>
  <text x="460.500" y="771.500" font-family="Liberation Sans,sans-serif" font-weight="bold" font-size="6.400" fill="#fff" textLength="16.500" lengthAdjust="spacingAndGlyphs">GBR</text>
  <!-- tray -->
  <path d="M1248.200 764.300l3-3.600 3 3.600z" fill="#fff"/>
  <path d="M1263.500 757.500h10v5q0 3.500-5 5.500q-5-2-5-5.500z" fill="#f4f6fa" stroke="#3a6ac0" stroke-width=".8"/>
  <path d="M1266 759.500h4.500v2h-3" stroke="#3a6ac0" stroke-width=".8" fill="none"/>
  <circle cx="1270.300" cy="764.300" r="3.100" fill="#e0241c"/><rect x="1269.200" y="763.300" width="2.200" height="2" fill="#fff"/>
  <ellipse cx="1285.400" cy="762" rx="5.600" ry="3" fill="none" stroke="#1a9cf0" stroke-width="1.500" transform="rotate(-20 1285.400 762)"/>
  <circle cx="1285.800" cy="761.800" r="2.300" fill="#3ab4ff"/>
  <path d="M1297.800 760.300h2l3-2.800v9.600l-3-2.800h-2z" fill="#fff"/>
  <path d="M1304.300 759.800q1.300 2.500 0 5M1306 758.300q2.200 4 0 8" fill="none" stroke="#e8e8e8" stroke-width=".9"/>
</svg>
<div class="t" style="left:1312.500px;top:751.500px;width:60px;text-align:center;font-size:8.600px;color:#fff">12:22</div>
<div class="t" style="left:1312.500px;top:763.300px;width:60px;text-align:center;font-size:8.600px;color:#fff">13/03/2019</div>

</div>
</body></html>
